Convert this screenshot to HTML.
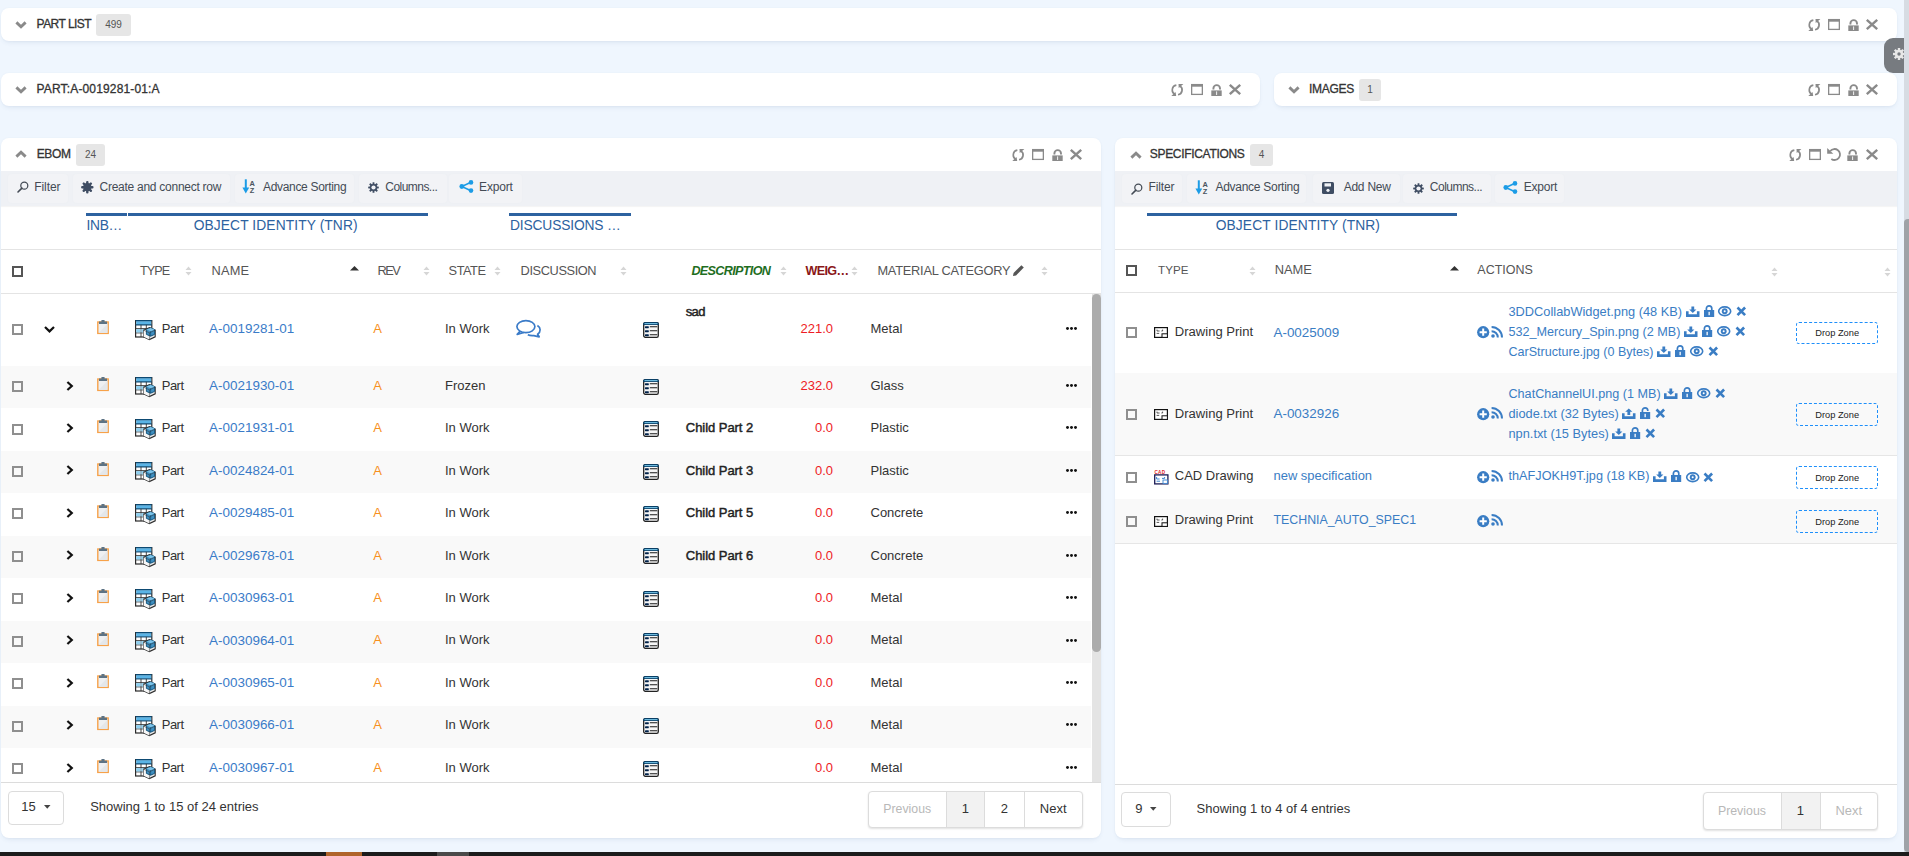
<!DOCTYPE html><html><head><meta charset="utf-8"><style>
html,body{margin:0;padding:0;}
body{width:1909px;height:856px;overflow:hidden;position:relative;background:#eff6fe;font-family:"Liberation Sans", sans-serif;}
.t{position:absolute;white-space:nowrap;}
.panel{position:absolute;background:#fff;border-radius:8px;box-shadow:0 3px 5px -2px rgba(60,90,140,0.13),0 0 2px rgba(60,90,140,0.05);}
.badge{position:absolute;background:#e6e6e6;border-radius:3px;text-align:center;font-size:10px;color:#555;}
svg{overflow:visible;}
</style></head><body>
<div class="panel" style="left:1px;top:8px;width:1896px;height:33px"></div>
<svg style="position:absolute;left:15px;top:21px" width="12" height="8" viewBox="0 0 12 8"><path d="M1.4 1.4 L6 5.7 L10.6 1.4" fill="none" stroke="#8a8a8a" stroke-width="2.9"/></svg>
<div class="t" style="left:36.6px;top:17.00px;font-size:12px;line-height:15px;color:#333;font-weight:normal;font-style:normal;-webkit-text-stroke:0.3px #333;letter-spacing:-0.544px;">PART LIST</div>
<div class="badge" style="left:96px;top:14px;width:35px;height:22px;line-height:22px">499</div>
<svg style="position:absolute;left:1808.1999999999998px;top:18.9px" width="13" height="12.5" viewBox="0 0 13 12.5"><path d="M5.35 1.07 A4.9 4.9 0 0 0 4.13 10.34" fill="none" stroke="#8a8a8a" stroke-width="1.7"/><path d="M7.05 10.73 A4.9 4.9 0 0 0 8.65 1.66" fill="none" stroke="#8a8a8a" stroke-width="1.7"/><path d="M0.33 11.9 L5.2 11.9 L4.5 8.1Z" fill="#8a8a8a"/><path d="M7.5 0 L12.4 0 L7.7 4.1Z" fill="#8a8a8a"/></svg>
<svg style="position:absolute;left:1828px;top:18.9px" width="12" height="11" viewBox="0 0 12 11"><rect x="0.65" y="0.6" width="10.7" height="9.8" fill="none" stroke="#8a8a8a" stroke-width="1.3"/><rect x="0" y="0" width="12" height="2.7" fill="#8a8a8a"/></svg>
<svg style="position:absolute;left:1847.6px;top:18.9px" width="11" height="12" viewBox="0 0 11 12"><path d="M2.4 5.6 V4.4 A3.3 3.3 0 0 1 9 4.4 V5.6" fill="none" stroke="#8a8a8a" stroke-width="1.9"/><rect x="0.3" y="6.4" width="10.4" height="5.6" fill="#8a8a8a"/><rect x="5.2" y="7.4" width="0.9" height="3.6" fill="#fff"/></svg>
<svg style="position:absolute;left:1866px;top:18.9px" width="12" height="11" viewBox="0 0 12 11"><path d="M0.8 0.8 L11.2 10.2 M11.2 0.8 L0.8 10.2" stroke="#8a8a8a" stroke-width="2.4"/></svg>
<div class="panel" style="left:1px;top:73px;width:1259px;height:33px"></div>
<svg style="position:absolute;left:15px;top:86px" width="12" height="8" viewBox="0 0 12 8"><path d="M1.4 1.4 L6 5.7 L10.6 1.4" fill="none" stroke="#8a8a8a" stroke-width="2.9"/></svg>
<div class="t" style="left:36.6px;top:82.00px;font-size:12px;line-height:15px;color:#333;font-weight:normal;font-style:normal;-webkit-text-stroke:0.3px #333;letter-spacing:0.150px;">PART:A-0019281-01:A</div>
<svg style="position:absolute;left:1171.1999999999998px;top:83.9px" width="13" height="12.5" viewBox="0 0 13 12.5"><path d="M5.35 1.07 A4.9 4.9 0 0 0 4.13 10.34" fill="none" stroke="#8a8a8a" stroke-width="1.7"/><path d="M7.05 10.73 A4.9 4.9 0 0 0 8.65 1.66" fill="none" stroke="#8a8a8a" stroke-width="1.7"/><path d="M0.33 11.9 L5.2 11.9 L4.5 8.1Z" fill="#8a8a8a"/><path d="M7.5 0 L12.4 0 L7.7 4.1Z" fill="#8a8a8a"/></svg>
<svg style="position:absolute;left:1191px;top:83.9px" width="12" height="11" viewBox="0 0 12 11"><rect x="0.65" y="0.6" width="10.7" height="9.8" fill="none" stroke="#8a8a8a" stroke-width="1.3"/><rect x="0" y="0" width="12" height="2.7" fill="#8a8a8a"/></svg>
<svg style="position:absolute;left:1210.6px;top:83.9px" width="11" height="12" viewBox="0 0 11 12"><path d="M2.4 5.6 V4.4 A3.3 3.3 0 0 1 9 4.4 V5.6" fill="none" stroke="#8a8a8a" stroke-width="1.9"/><rect x="0.3" y="6.4" width="10.4" height="5.6" fill="#8a8a8a"/><rect x="5.2" y="7.4" width="0.9" height="3.6" fill="#fff"/></svg>
<svg style="position:absolute;left:1229px;top:83.9px" width="12" height="11" viewBox="0 0 12 11"><path d="M0.8 0.8 L11.2 10.2 M11.2 0.8 L0.8 10.2" stroke="#8a8a8a" stroke-width="2.4"/></svg>
<div class="panel" style="left:1274px;top:73px;width:623px;height:33px"></div>
<svg style="position:absolute;left:1288px;top:86px" width="12" height="8" viewBox="0 0 12 8"><path d="M1.4 1.4 L6 5.7 L10.6 1.4" fill="none" stroke="#8a8a8a" stroke-width="2.9"/></svg>
<div class="t" style="left:1309px;top:82.00px;font-size:12px;line-height:15px;color:#333;font-weight:normal;font-style:normal;-webkit-text-stroke:0.3px #333;letter-spacing:-0.295px;">IMAGES</div>
<div class="badge" style="left:1359px;top:79px;width:22px;height:22px;line-height:22px">1</div>
<svg style="position:absolute;left:1808.1999999999998px;top:83.9px" width="13" height="12.5" viewBox="0 0 13 12.5"><path d="M5.35 1.07 A4.9 4.9 0 0 0 4.13 10.34" fill="none" stroke="#8a8a8a" stroke-width="1.7"/><path d="M7.05 10.73 A4.9 4.9 0 0 0 8.65 1.66" fill="none" stroke="#8a8a8a" stroke-width="1.7"/><path d="M0.33 11.9 L5.2 11.9 L4.5 8.1Z" fill="#8a8a8a"/><path d="M7.5 0 L12.4 0 L7.7 4.1Z" fill="#8a8a8a"/></svg>
<svg style="position:absolute;left:1828px;top:83.9px" width="12" height="11" viewBox="0 0 12 11"><rect x="0.65" y="0.6" width="10.7" height="9.8" fill="none" stroke="#8a8a8a" stroke-width="1.3"/><rect x="0" y="0" width="12" height="2.7" fill="#8a8a8a"/></svg>
<svg style="position:absolute;left:1847.6px;top:83.9px" width="11" height="12" viewBox="0 0 11 12"><path d="M2.4 5.6 V4.4 A3.3 3.3 0 0 1 9 4.4 V5.6" fill="none" stroke="#8a8a8a" stroke-width="1.9"/><rect x="0.3" y="6.4" width="10.4" height="5.6" fill="#8a8a8a"/><rect x="5.2" y="7.4" width="0.9" height="3.6" fill="#fff"/></svg>
<svg style="position:absolute;left:1866px;top:83.9px" width="12" height="11" viewBox="0 0 12 11"><path d="M0.8 0.8 L11.2 10.2 M11.2 0.8 L0.8 10.2" stroke="#8a8a8a" stroke-width="2.4"/></svg>
<div style="position:absolute;left:1884px;top:38px;width:22px;height:34.6px;background:#777b80;border-radius:9px 0 0 9px;"></div>
<svg style="position:absolute;left:1893px;top:48px" width="12" height="12" viewBox="0 0 12 12"><g fill="#e8e8e8"><circle cx="6" cy="6" r="4.2"/><rect x="4.8" y="0" width="2.4" height="12"/><rect x="0" y="4.8" width="12" height="2.4"/><rect x="4.8" y="0" width="2.4" height="12" transform="rotate(45 6 6)"/><rect x="4.8" y="0" width="2.4" height="12" transform="rotate(-45 6 6)"/></g><circle cx="6" cy="6" r="1.7" fill="#777b80"/></svg>
<div style="position:absolute;left:1904px;top:0px;width:5px;height:856px;background:#d7dce3;"></div>
<div style="position:absolute;left:1904px;top:219px;width:5px;height:633px;background:#9fa3a8;border-radius:4px 0 0 4px;"></div>
<div style="position:absolute;left:0px;top:852px;width:1909px;height:4px;background:#1c1c1c;"></div>
<div style="position:absolute;left:326px;top:852px;width:36px;height:4px;background:#b0642a;"></div>
<div style="position:absolute;left:437px;top:852px;width:32px;height:4px;background:#4a4a4a;"></div>
<div class="panel" style="left:1px;top:138px;width:1100px;height:700px"></div>
<svg style="position:absolute;left:15px;top:150px" width="12" height="8" viewBox="0 0 12 8"><path d="M1.4 6.6 L6 2.3 L10.6 6.6" fill="none" stroke="#8a8a8a" stroke-width="2.9"/></svg>
<div class="t" style="left:36.7px;top:147.00px;font-size:12px;line-height:15px;color:#333;font-weight:normal;font-style:normal;-webkit-text-stroke:0.3px #333;letter-spacing:-0.346px;">EBOM</div>
<div class="badge" style="left:76px;top:144px;width:29px;height:22px;line-height:22px">24</div>
<svg style="position:absolute;left:1012.2px;top:149.4px" width="13" height="12.5" viewBox="0 0 13 12.5"><path d="M5.35 1.07 A4.9 4.9 0 0 0 4.13 10.34" fill="none" stroke="#8a8a8a" stroke-width="1.7"/><path d="M7.05 10.73 A4.9 4.9 0 0 0 8.65 1.66" fill="none" stroke="#8a8a8a" stroke-width="1.7"/><path d="M0.33 11.9 L5.2 11.9 L4.5 8.1Z" fill="#8a8a8a"/><path d="M7.5 0 L12.4 0 L7.7 4.1Z" fill="#8a8a8a"/></svg>
<svg style="position:absolute;left:1032px;top:149.4px" width="12" height="11" viewBox="0 0 12 11"><rect x="0.65" y="0.6" width="10.7" height="9.8" fill="none" stroke="#8a8a8a" stroke-width="1.3"/><rect x="0" y="0" width="12" height="2.7" fill="#8a8a8a"/></svg>
<svg style="position:absolute;left:1051.6px;top:149.4px" width="11" height="12" viewBox="0 0 11 12"><path d="M2.4 5.6 V4.4 A3.3 3.3 0 0 1 9 4.4 V5.6" fill="none" stroke="#8a8a8a" stroke-width="1.9"/><rect x="0.3" y="6.4" width="10.4" height="5.6" fill="#8a8a8a"/><rect x="5.2" y="7.4" width="0.9" height="3.6" fill="#fff"/></svg>
<svg style="position:absolute;left:1070px;top:149.4px" width="12" height="11" viewBox="0 0 12 11"><path d="M0.8 0.8 L11.2 10.2 M11.2 0.8 L0.8 10.2" stroke="#8a8a8a" stroke-width="2.4"/></svg>
<div style="position:absolute;left:1px;top:171px;width:1100px;height:35px;background:#eff1f5;box-shadow:0 1px 1px rgba(0,0,0,0.04);"></div>
<div style="position:absolute;left:8px;top:174px;width:60px;height:29px;background:#f2f3f6;border-radius:4px;box-shadow:0 0 0 1px #eef0f4;"></div>
<div style="position:absolute;left:73px;top:174px;width:157px;height:29px;background:#f2f3f6;border-radius:4px;box-shadow:0 0 0 1px #eef0f4;"></div>
<div style="position:absolute;left:235px;top:174px;width:119px;height:29px;background:#f2f3f6;border-radius:4px;box-shadow:0 0 0 1px #eef0f4;"></div>
<div style="position:absolute;left:359px;top:174px;width:88px;height:29px;background:#f2f3f6;border-radius:4px;box-shadow:0 0 0 1px #eef0f4;"></div>
<div style="position:absolute;left:449px;top:174px;width:73px;height:29px;background:#f2f3f6;border-radius:4px;box-shadow:0 0 0 1px #eef0f4;"></div>
<svg style="position:absolute;left:16.5px;top:181px" width="12" height="12" viewBox="0 0 12 12"><circle cx="7.3" cy="4.7" r="3.5" fill="none" stroke="#444b55" stroke-width="1.25"/><path d="M4.9 7.1 L1 11" stroke="#444b55" stroke-width="1.6" stroke-linecap="round"/></svg>
<div class="t" style="left:34.2px;top:180.00px;font-size:12px;line-height:15px;color:#444b55;font-weight:normal;font-style:normal;letter-spacing:-0.053px;">Filter</div>
<svg style="position:absolute;left:81px;top:181px" width="12.6" height="12.4" viewBox="0 0 12.6 12.4"><rect x="5.1" y="0" width="2.4" height="12.4" rx="1" fill="#3f4d63" transform="rotate(0 6.3 6.2)"/><rect x="5.1" y="0" width="2.4" height="12.4" rx="1" fill="#3f4d63" transform="rotate(45 6.3 6.2)"/><rect x="5.1" y="0" width="2.4" height="12.4" rx="1" fill="#3f4d63" transform="rotate(90 6.3 6.2)"/><rect x="5.1" y="0" width="2.4" height="12.4" rx="1" fill="#3f4d63" transform="rotate(135 6.3 6.2)"/><circle cx="6.3" cy="6.2" r="4.1" fill="#3f4d63"/></svg>
<div class="t" style="left:99.5px;top:180.00px;font-size:12px;line-height:15px;color:#444b55;font-weight:normal;font-style:normal;letter-spacing:-0.262px;">Create and connect row</div>
<svg style="position:absolute;left:242px;top:178.5px" width="14" height="15" viewBox="0 0 14 15"><path d="M3.8 0.3 V10" stroke="#1c9ce6" stroke-width="2"/><path d="M0.4 8.4 L7.2 8.4 L3.8 14.4Z" fill="#1c9ce6"/><text x="7.6" y="6.6" font-size="7.4" font-family="Liberation Sans" font-weight="bold" fill="#4a5560">A</text><text x="7.8" y="14" font-size="7.4" font-family="Liberation Sans" font-weight="bold" fill="#4a5560">Z</text></svg>
<div class="t" style="left:263px;top:180.00px;font-size:12px;line-height:15px;color:#444b55;font-weight:normal;font-style:normal;letter-spacing:-0.318px;">Advance Sorting</div>
<svg style="position:absolute;left:368px;top:182px" width="11" height="11" viewBox="0 0 11 11"><rect x="4.55" y="0.2" width="1.9" height="10.6" rx="0.4" fill="#3f4d63" transform="rotate(0 5.5 5.5)"/><rect x="4.55" y="0.2" width="1.9" height="10.6" rx="0.4" fill="#3f4d63" transform="rotate(45 5.5 5.5)"/><rect x="4.55" y="0.2" width="1.9" height="10.6" rx="0.4" fill="#3f4d63" transform="rotate(90 5.5 5.5)"/><rect x="4.55" y="0.2" width="1.9" height="10.6" rx="0.4" fill="#3f4d63" transform="rotate(135 5.5 5.5)"/><circle cx="5.5" cy="5.5" r="3.6" fill="#3f4d63"/><circle cx="5.5" cy="5.5" r="2.1" fill="#f1f2f6"/></svg>
<div class="t" style="left:385.3px;top:180.00px;font-size:12px;line-height:15px;color:#444b55;font-weight:normal;font-style:normal;letter-spacing:-0.539px;">Columns...</div>
<svg style="position:absolute;left:459px;top:180px" width="15" height="13" viewBox="0 0 15 13"><path d="M2.8 6.5 L12 2.2 M2.8 6.5 L12 10.8" stroke="#1c9ce6" stroke-width="1.5"/><circle cx="2.8" cy="6.5" r="2.4" fill="#1c9ce6"/><circle cx="12" cy="2.4" r="2.3" fill="#1c9ce6"/><circle cx="12" cy="10.6" r="2.3" fill="#1c9ce6"/></svg>
<div class="t" style="left:479.1px;top:180.00px;font-size:12px;line-height:15px;color:#444b55;font-weight:normal;font-style:normal;letter-spacing:-0.176px;">Export</div>
<div style="position:absolute;left:86px;top:213px;width:40.8px;height:3px;background:#2d62a0;"></div>
<div style="position:absolute;left:128px;top:213px;width:300px;height:3px;background:#2d62a0;"></div>
<div style="position:absolute;left:509px;top:213px;width:122px;height:3px;background:#2d62a0;"></div>
<div class="t" style="left:86.6px;top:217.00px;font-size:13.8px;line-height:17px;color:#2d62a0;font-weight:normal;font-style:normal;letter-spacing:-0.335px;">INB…</div>
<div class="t" style="left:193.7px;top:217.00px;font-size:13.8px;line-height:17px;color:#2d62a0;font-weight:normal;font-style:normal;letter-spacing:0.094px;">OBJECT IDENTITY (TNR)</div>
<div class="t" style="left:510px;top:217.00px;font-size:13.8px;line-height:17px;color:#2d62a0;font-weight:normal;font-style:normal;letter-spacing:-0.160px;">DISCUSSIONS …</div>
<div style="position:absolute;left:1px;top:249px;width:1100px;height:1px;background:#e4e4e4;"></div>
<div style="position:absolute;left:11.5px;top:265.5px;width:11px;height:11px;border:2px solid #555;box-sizing:border-box;"></div>
<div class="t" style="left:140px;top:263.00px;font-size:12.6px;line-height:16px;color:#555;font-weight:normal;font-style:normal;letter-spacing:-0.903px;">TYPE</div>
<svg style="position:absolute;left:185px;top:266px" width="7" height="10" viewBox="0 0 7 10"><path d="M0.5 4 L3.5 0.5 L6.5 4Z M0.5 6 L3.5 9.5 L6.5 6Z" fill="#d6d6d6"/></svg>
<div class="t" style="left:211.6px;top:263.00px;font-size:12.8px;line-height:16px;color:#555;font-weight:normal;font-style:normal;letter-spacing:0.139px;">NAME</div>
<svg style="position:absolute;left:349.5px;top:265.5px" width="9" height="5" viewBox="0 0 9 5"><path d="M0 4.5 L4.5 0 L9 4.5Z" fill="#333"/></svg>
<div class="t" style="left:377.6px;top:263.00px;font-size:12.8px;line-height:16px;color:#555;font-weight:normal;font-style:normal;letter-spacing:-1.610px;">REV</div>
<svg style="position:absolute;left:422.5px;top:266px" width="7" height="10" viewBox="0 0 7 10"><path d="M0.5 4 L3.5 0.5 L6.5 4Z M0.5 6 L3.5 9.5 L6.5 6Z" fill="#d6d6d6"/></svg>
<div class="t" style="left:448.6px;top:263.00px;font-size:12.8px;line-height:16px;color:#555;font-weight:normal;font-style:normal;letter-spacing:-0.488px;">STATE</div>
<svg style="position:absolute;left:494px;top:266px" width="7" height="10" viewBox="0 0 7 10"><path d="M0.5 4 L3.5 0.5 L6.5 4Z M0.5 6 L3.5 9.5 L6.5 6Z" fill="#d6d6d6"/></svg>
<div class="t" style="left:520.6px;top:263.00px;font-size:12.8px;line-height:16px;color:#555;font-weight:normal;font-style:normal;letter-spacing:-0.406px;">DISCUSSION</div>
<svg style="position:absolute;left:620px;top:266px" width="7" height="10" viewBox="0 0 7 10"><path d="M0.5 4 L3.5 0.5 L6.5 4Z M0.5 6 L3.5 9.5 L6.5 6Z" fill="#d6d6d6"/></svg>
<div class="t" style="left:691.4px;top:263.00px;font-size:12.6px;line-height:16px;color:#1f6e1f;font-weight:bold;font-style:italic;letter-spacing:-0.651px;">DESCRIPTION</div>
<svg style="position:absolute;left:780px;top:266px" width="7" height="10" viewBox="0 0 7 10"><path d="M0.5 4 L3.5 0.5 L6.5 4Z M0.5 6 L3.5 9.5 L6.5 6Z" fill="#d6d6d6"/></svg>
<div class="t" style="left:805.5px;top:263.00px;font-size:12.6px;line-height:16px;color:#8a1717;font-weight:bold;font-style:normal;letter-spacing:-0.675px;">WEIG…</div>
<svg style="position:absolute;left:851px;top:266px" width="7" height="10" viewBox="0 0 7 10"><path d="M0.5 4 L3.5 0.5 L6.5 4Z M0.5 6 L3.5 9.5 L6.5 6Z" fill="#d6d6d6"/></svg>
<div class="t" style="left:877.4px;top:263.00px;font-size:12.8px;line-height:16px;color:#555;font-weight:normal;font-style:normal;letter-spacing:-0.231px;">MATERIAL CATEGORY</div>
<svg style="position:absolute;left:1012px;top:264px" width="13" height="13" viewBox="0 0 13 13"><path d="M1 12 L1.6 9 L9.4 1.2 L11.8 3.6 L4 11.4Z" fill="#555"/></svg>
<svg style="position:absolute;left:1041px;top:266px" width="7" height="10" viewBox="0 0 7 10"><path d="M0.5 4 L3.5 0.5 L6.5 4Z M0.5 6 L3.5 9.5 L6.5 6Z" fill="#d6d6d6"/></svg>
<div style="position:absolute;left:1px;top:293px;width:1100px;height:1px;background:#e4e4e4;"></div>
<div style="position:absolute;left:0;top:0;width:1909px;height:856px;clip-path:inset(294px 818px 73.5px 1px)">
<div style="position:absolute;left:12px;top:324.2px;width:11px;height:11px;border:2px solid #8f8f8f;box-sizing:border-box;"></div>
<svg style="position:absolute;left:44px;top:325.7px" width="11" height="7" viewBox="0 0 11 7"><path d="M1 1 L5.5 5.4 L10 1" fill="none" stroke="#111" stroke-width="2.2"/></svg>
<svg style="position:absolute;left:97px;top:320.0px" width="12" height="14" viewBox="0 0 12 14"><rect x="0.8" y="2" width="10.4" height="11.4" fill="#eef0f2" stroke="#f7a24a" stroke-width="1.4"/><path d="M1.5 13 L10.5 4 V13Z" fill="#e4e7ea"/><path d="M2 1.6 H10 V4 H2Z" fill="#5d7384"/><rect x="4.2" y="0" width="3.6" height="2" rx="1" fill="#5d7384"/></svg>
<svg style="position:absolute;left:135px;top:320.0px" width="21" height="20" viewBox="0 0 21 20"><rect x="0.6" y="0.6" width="16.2" height="16.4" fill="#fff" stroke="#2a2a2a" stroke-width="1.2"/><rect x="1.2" y="1.2" width="15" height="3.6" fill="#5ab4e6"/><path d="M0.6 4.9 H16.8" stroke="#0d4a73" stroke-width="1.1"/><path d="M0.6 0.6 H16.8" stroke="#0d4a73" stroke-width="1.2"/><path d="M0.6 8.6 H16.8 M0.6 12.9 H16.8 M6 4.9 V17 M11.3 4.9 V17" stroke="#333" stroke-width="0.9"/><rect x="1.2" y="9.1" width="4.4" height="3.4" fill="#8fd0f0"/><rect x="6.4" y="9.1" width="4.5" height="3.4" fill="#8fd0f0"/><path d="M8.6 10.2 L14.4 7.6 L20.2 10.2 V16.8 L14.4 19.6 L8.6 16.8Z" fill="#e9e9e9" stroke="#2f2f2f" stroke-width="1.1"/><path d="M8.6 10.2 L14.4 12.8 L14.4 19.6 L8.6 16.8Z" fill="#f7f7f7"/><path d="M11.4 9.6 L15.6 7.9 L19.6 9.6 V14.4 L15.6 16.2 L11.4 14.4Z" fill="#3f8fc0" stroke="#0f4f77" stroke-width="0.9"/><path d="M11.4 9.6 L15.6 11.3 L19.6 9.6 L15.6 7.9Z" fill="#7cc4ea"/><path d="M15.6 11.3 V16.2" stroke="#0f4f77" stroke-width="0.7"/><path d="M8.6 10.2 L14.4 12.8 L20.2 10.2 M14.4 12.8 V19.6" fill="none" stroke="#2f2f2f" stroke-width="0.8" opacity="0.6"/></svg>
<div class="t" style="left:161.8px;top:321.00px;font-size:13px;line-height:16px;color:#333;font-weight:normal;font-style:normal;letter-spacing:-0.547px;">Part</div>
<div class="t" style="left:209.1px;top:320.00px;font-size:13.45px;line-height:17px;color:#3a7bc8;font-weight:normal;font-style:normal;">A-0019281-01</div>
<div class="t" style="left:373.2px;top:321.00px;font-size:13px;line-height:16px;color:#f7901e;font-weight:normal;font-style:normal;">A</div>
<div class="t" style="left:445px;top:321.00px;font-size:13px;line-height:16px;color:#333;font-weight:normal;font-style:normal;">In Work</div>
<svg style="position:absolute;left:516px;top:319.7px" width="24" height="18" viewBox="0 0 24 18"><ellipse cx="9.9" cy="6.6" rx="9" ry="6" fill="none" stroke="#3a7bc8" stroke-width="1.7"/><path d="M4.2 11.2 L1.2 14.4 L7.8 12.5" fill="none" stroke="#3a7bc8" stroke-width="1.7" stroke-linejoin="round"/><path d="M21.4 5.4 A6.2 5.4 0 0 1 21.6 14.2 L23.2 16.8 L17.8 15.6 Q14.2 15.9 11.8 14.8" fill="none" stroke="#3a7bc8" stroke-width="1.7" stroke-linejoin="round"/></svg>
<svg style="position:absolute;left:643px;top:321.8px" width="16" height="16" viewBox="0 0 16 16"><rect x="0.7" y="0.7" width="14.6" height="14.6" rx="1.6" fill="#f6f6f6" stroke="#222" stroke-width="1.3"/><path d="M0.05 3.0 V2.3 A2.25 2.25 0 0 1 2.3 0.05 H13.7 A2.25 2.25 0 0 1 15.95 2.3 V3.0 Z" fill="#0a3f66"/><rect x="1.5" y="1.15" width="13" height="1.0" fill="#7fcff3"/><rect x="2" y="4.3" width="3.8" height="1.9" rx="0.4" fill="#00224a"/><rect x="2" y="8.3" width="3.8" height="1.9" rx="0.4" fill="#00224a"/><rect x="2" y="12.3" width="3.8" height="1.9" rx="0.4" fill="#00224a"/><path d="M7.2 4.75 H13.9 M7.2 8.75 H13.9 M7.2 12.75 H13.9" stroke="#1a1a1a" stroke-width="1.05" stroke-linecap="round"/></svg>
<div class="t" style="left:685.8px;top:304.00px;font-size:13px;line-height:16px;color:#222;font-weight:normal;font-style:normal;-webkit-text-stroke:0.45px #222;letter-spacing:-0.679px;">sad</div>
<div class="t" style="right:1076px;top:321.00px;font-size:13px;line-height:16px;color:#ee1c25;font-weight:normal;font-style:normal;">221.0</div>
<div class="t" style="left:870.5px;top:321.00px;font-size:13px;line-height:16px;color:#333;font-weight:normal;font-style:normal;">Metal</div>
<svg style="position:absolute;left:1066.4px;top:327.0px" width="11" height="3" viewBox="0 0 11 3"><circle cx="1.5" cy="1.5" r="1.45" fill="#111"/><circle cx="5.5" cy="1.5" r="1.45" fill="#111"/><circle cx="9.5" cy="1.5" r="1.45" fill="#111"/></svg>
<div style="position:absolute;left:1px;top:366.0px;width:1090px;height:42.44px;background:#f9f9f9;"></div>
<div style="position:absolute;left:12px;top:381.1px;width:11px;height:11px;border:2px solid #8f8f8f;box-sizing:border-box;"></div>
<svg style="position:absolute;left:65.5px;top:380.6px" width="8" height="10" viewBox="0 0 8 10"><path d="M1.4 1 L5.8 5 L1.4 9" fill="none" stroke="#111" stroke-width="2.2"/></svg>
<svg style="position:absolute;left:97px;top:376.90000000000003px" width="12" height="14" viewBox="0 0 12 14"><rect x="0.8" y="2" width="10.4" height="11.4" fill="#eef0f2" stroke="#f7a24a" stroke-width="1.4"/><path d="M1.5 13 L10.5 4 V13Z" fill="#e4e7ea"/><path d="M2 1.6 H10 V4 H2Z" fill="#5d7384"/><rect x="4.2" y="0" width="3.6" height="2" rx="1" fill="#5d7384"/></svg>
<svg style="position:absolute;left:135px;top:376.90000000000003px" width="21" height="20" viewBox="0 0 21 20"><rect x="0.6" y="0.6" width="16.2" height="16.4" fill="#fff" stroke="#2a2a2a" stroke-width="1.2"/><rect x="1.2" y="1.2" width="15" height="3.6" fill="#5ab4e6"/><path d="M0.6 4.9 H16.8" stroke="#0d4a73" stroke-width="1.1"/><path d="M0.6 0.6 H16.8" stroke="#0d4a73" stroke-width="1.2"/><path d="M0.6 8.6 H16.8 M0.6 12.9 H16.8 M6 4.9 V17 M11.3 4.9 V17" stroke="#333" stroke-width="0.9"/><rect x="1.2" y="9.1" width="4.4" height="3.4" fill="#8fd0f0"/><rect x="6.4" y="9.1" width="4.5" height="3.4" fill="#8fd0f0"/><path d="M8.6 10.2 L14.4 7.6 L20.2 10.2 V16.8 L14.4 19.6 L8.6 16.8Z" fill="#e9e9e9" stroke="#2f2f2f" stroke-width="1.1"/><path d="M8.6 10.2 L14.4 12.8 L14.4 19.6 L8.6 16.8Z" fill="#f7f7f7"/><path d="M11.4 9.6 L15.6 7.9 L19.6 9.6 V14.4 L15.6 16.2 L11.4 14.4Z" fill="#3f8fc0" stroke="#0f4f77" stroke-width="0.9"/><path d="M11.4 9.6 L15.6 11.3 L19.6 9.6 L15.6 7.9Z" fill="#7cc4ea"/><path d="M15.6 11.3 V16.2" stroke="#0f4f77" stroke-width="0.7"/><path d="M8.6 10.2 L14.4 12.8 L20.2 10.2 M14.4 12.8 V19.6" fill="none" stroke="#2f2f2f" stroke-width="0.8" opacity="0.6"/></svg>
<div class="t" style="left:161.8px;top:378.00px;font-size:13px;line-height:16px;color:#333;font-weight:normal;font-style:normal;letter-spacing:-0.547px;">Part</div>
<div class="t" style="left:209.1px;top:377.00px;font-size:13.45px;line-height:17px;color:#3a7bc8;font-weight:normal;font-style:normal;">A-0021930-01</div>
<div class="t" style="left:373.2px;top:378.00px;font-size:13px;line-height:16px;color:#f7901e;font-weight:normal;font-style:normal;">A</div>
<div class="t" style="left:445px;top:378.00px;font-size:13px;line-height:16px;color:#333;font-weight:normal;font-style:normal;">Frozen</div>
<svg style="position:absolute;left:643px;top:378.70000000000005px" width="16" height="16" viewBox="0 0 16 16"><rect x="0.7" y="0.7" width="14.6" height="14.6" rx="1.6" fill="#f6f6f6" stroke="#222" stroke-width="1.3"/><path d="M0.05 3.0 V2.3 A2.25 2.25 0 0 1 2.3 0.05 H13.7 A2.25 2.25 0 0 1 15.95 2.3 V3.0 Z" fill="#0a3f66"/><rect x="1.5" y="1.15" width="13" height="1.0" fill="#7fcff3"/><rect x="2" y="4.3" width="3.8" height="1.9" rx="0.4" fill="#00224a"/><rect x="2" y="8.3" width="3.8" height="1.9" rx="0.4" fill="#00224a"/><rect x="2" y="12.3" width="3.8" height="1.9" rx="0.4" fill="#00224a"/><path d="M7.2 4.75 H13.9 M7.2 8.75 H13.9 M7.2 12.75 H13.9" stroke="#1a1a1a" stroke-width="1.05" stroke-linecap="round"/></svg>
<div class="t" style="right:1076px;top:378.00px;font-size:13px;line-height:16px;color:#ee1c25;font-weight:normal;font-style:normal;">232.0</div>
<div class="t" style="left:870.5px;top:378.00px;font-size:13px;line-height:16px;color:#333;font-weight:normal;font-style:normal;">Glass</div>
<svg style="position:absolute;left:1066.4px;top:383.90000000000003px" width="11" height="3" viewBox="0 0 11 3"><circle cx="1.5" cy="1.5" r="1.45" fill="#111"/><circle cx="5.5" cy="1.5" r="1.45" fill="#111"/><circle cx="9.5" cy="1.5" r="1.45" fill="#111"/></svg>
<div style="position:absolute;left:12px;top:423.54px;width:11px;height:11px;border:2px solid #8f8f8f;box-sizing:border-box;"></div>
<svg style="position:absolute;left:65.5px;top:423.04px" width="8" height="10" viewBox="0 0 8 10"><path d="M1.4 1 L5.8 5 L1.4 9" fill="none" stroke="#111" stroke-width="2.2"/></svg>
<svg style="position:absolute;left:97px;top:419.34000000000003px" width="12" height="14" viewBox="0 0 12 14"><rect x="0.8" y="2" width="10.4" height="11.4" fill="#eef0f2" stroke="#f7a24a" stroke-width="1.4"/><path d="M1.5 13 L10.5 4 V13Z" fill="#e4e7ea"/><path d="M2 1.6 H10 V4 H2Z" fill="#5d7384"/><rect x="4.2" y="0" width="3.6" height="2" rx="1" fill="#5d7384"/></svg>
<svg style="position:absolute;left:135px;top:419.34000000000003px" width="21" height="20" viewBox="0 0 21 20"><rect x="0.6" y="0.6" width="16.2" height="16.4" fill="#fff" stroke="#2a2a2a" stroke-width="1.2"/><rect x="1.2" y="1.2" width="15" height="3.6" fill="#5ab4e6"/><path d="M0.6 4.9 H16.8" stroke="#0d4a73" stroke-width="1.1"/><path d="M0.6 0.6 H16.8" stroke="#0d4a73" stroke-width="1.2"/><path d="M0.6 8.6 H16.8 M0.6 12.9 H16.8 M6 4.9 V17 M11.3 4.9 V17" stroke="#333" stroke-width="0.9"/><rect x="1.2" y="9.1" width="4.4" height="3.4" fill="#8fd0f0"/><rect x="6.4" y="9.1" width="4.5" height="3.4" fill="#8fd0f0"/><path d="M8.6 10.2 L14.4 7.6 L20.2 10.2 V16.8 L14.4 19.6 L8.6 16.8Z" fill="#e9e9e9" stroke="#2f2f2f" stroke-width="1.1"/><path d="M8.6 10.2 L14.4 12.8 L14.4 19.6 L8.6 16.8Z" fill="#f7f7f7"/><path d="M11.4 9.6 L15.6 7.9 L19.6 9.6 V14.4 L15.6 16.2 L11.4 14.4Z" fill="#3f8fc0" stroke="#0f4f77" stroke-width="0.9"/><path d="M11.4 9.6 L15.6 11.3 L19.6 9.6 L15.6 7.9Z" fill="#7cc4ea"/><path d="M15.6 11.3 V16.2" stroke="#0f4f77" stroke-width="0.7"/><path d="M8.6 10.2 L14.4 12.8 L20.2 10.2 M14.4 12.8 V19.6" fill="none" stroke="#2f2f2f" stroke-width="0.8" opacity="0.6"/></svg>
<div class="t" style="left:161.8px;top:420.00px;font-size:13px;line-height:16px;color:#333;font-weight:normal;font-style:normal;letter-spacing:-0.547px;">Part</div>
<div class="t" style="left:209.1px;top:419.00px;font-size:13.45px;line-height:17px;color:#3a7bc8;font-weight:normal;font-style:normal;">A-0021931-01</div>
<div class="t" style="left:373.2px;top:420.00px;font-size:13px;line-height:16px;color:#f7901e;font-weight:normal;font-style:normal;">A</div>
<div class="t" style="left:445px;top:420.00px;font-size:13px;line-height:16px;color:#333;font-weight:normal;font-style:normal;">In Work</div>
<svg style="position:absolute;left:643px;top:421.14000000000004px" width="16" height="16" viewBox="0 0 16 16"><rect x="0.7" y="0.7" width="14.6" height="14.6" rx="1.6" fill="#f6f6f6" stroke="#222" stroke-width="1.3"/><path d="M0.05 3.0 V2.3 A2.25 2.25 0 0 1 2.3 0.05 H13.7 A2.25 2.25 0 0 1 15.95 2.3 V3.0 Z" fill="#0a3f66"/><rect x="1.5" y="1.15" width="13" height="1.0" fill="#7fcff3"/><rect x="2" y="4.3" width="3.8" height="1.9" rx="0.4" fill="#00224a"/><rect x="2" y="8.3" width="3.8" height="1.9" rx="0.4" fill="#00224a"/><rect x="2" y="12.3" width="3.8" height="1.9" rx="0.4" fill="#00224a"/><path d="M7.2 4.75 H13.9 M7.2 8.75 H13.9 M7.2 12.75 H13.9" stroke="#1a1a1a" stroke-width="1.05" stroke-linecap="round"/></svg>
<div class="t" style="left:685.8px;top:420.00px;font-size:13px;line-height:16px;color:#222;font-weight:normal;font-style:normal;-webkit-text-stroke:0.45px #222;letter-spacing:-0.047px;">Child Part 2</div>
<div class="t" style="right:1076px;top:420.00px;font-size:13px;line-height:16px;color:#ee1c25;font-weight:normal;font-style:normal;">0.0</div>
<div class="t" style="left:870.5px;top:420.00px;font-size:13px;line-height:16px;color:#333;font-weight:normal;font-style:normal;">Plastic</div>
<svg style="position:absolute;left:1066.4px;top:426.34000000000003px" width="11" height="3" viewBox="0 0 11 3"><circle cx="1.5" cy="1.5" r="1.45" fill="#111"/><circle cx="5.5" cy="1.5" r="1.45" fill="#111"/><circle cx="9.5" cy="1.5" r="1.45" fill="#111"/></svg>
<div style="position:absolute;left:1px;top:450.88px;width:1090px;height:42.44px;background:#f9f9f9;"></div>
<div style="position:absolute;left:12px;top:465.98px;width:11px;height:11px;border:2px solid #8f8f8f;box-sizing:border-box;"></div>
<svg style="position:absolute;left:65.5px;top:465.48px" width="8" height="10" viewBox="0 0 8 10"><path d="M1.4 1 L5.8 5 L1.4 9" fill="none" stroke="#111" stroke-width="2.2"/></svg>
<svg style="position:absolute;left:97px;top:461.78000000000003px" width="12" height="14" viewBox="0 0 12 14"><rect x="0.8" y="2" width="10.4" height="11.4" fill="#eef0f2" stroke="#f7a24a" stroke-width="1.4"/><path d="M1.5 13 L10.5 4 V13Z" fill="#e4e7ea"/><path d="M2 1.6 H10 V4 H2Z" fill="#5d7384"/><rect x="4.2" y="0" width="3.6" height="2" rx="1" fill="#5d7384"/></svg>
<svg style="position:absolute;left:135px;top:461.78000000000003px" width="21" height="20" viewBox="0 0 21 20"><rect x="0.6" y="0.6" width="16.2" height="16.4" fill="#fff" stroke="#2a2a2a" stroke-width="1.2"/><rect x="1.2" y="1.2" width="15" height="3.6" fill="#5ab4e6"/><path d="M0.6 4.9 H16.8" stroke="#0d4a73" stroke-width="1.1"/><path d="M0.6 0.6 H16.8" stroke="#0d4a73" stroke-width="1.2"/><path d="M0.6 8.6 H16.8 M0.6 12.9 H16.8 M6 4.9 V17 M11.3 4.9 V17" stroke="#333" stroke-width="0.9"/><rect x="1.2" y="9.1" width="4.4" height="3.4" fill="#8fd0f0"/><rect x="6.4" y="9.1" width="4.5" height="3.4" fill="#8fd0f0"/><path d="M8.6 10.2 L14.4 7.6 L20.2 10.2 V16.8 L14.4 19.6 L8.6 16.8Z" fill="#e9e9e9" stroke="#2f2f2f" stroke-width="1.1"/><path d="M8.6 10.2 L14.4 12.8 L14.4 19.6 L8.6 16.8Z" fill="#f7f7f7"/><path d="M11.4 9.6 L15.6 7.9 L19.6 9.6 V14.4 L15.6 16.2 L11.4 14.4Z" fill="#3f8fc0" stroke="#0f4f77" stroke-width="0.9"/><path d="M11.4 9.6 L15.6 11.3 L19.6 9.6 L15.6 7.9Z" fill="#7cc4ea"/><path d="M15.6 11.3 V16.2" stroke="#0f4f77" stroke-width="0.7"/><path d="M8.6 10.2 L14.4 12.8 L20.2 10.2 M14.4 12.8 V19.6" fill="none" stroke="#2f2f2f" stroke-width="0.8" opacity="0.6"/></svg>
<div class="t" style="left:161.8px;top:463.00px;font-size:13px;line-height:16px;color:#333;font-weight:normal;font-style:normal;letter-spacing:-0.547px;">Part</div>
<div class="t" style="left:209.1px;top:462.00px;font-size:13.45px;line-height:17px;color:#3a7bc8;font-weight:normal;font-style:normal;">A-0024824-01</div>
<div class="t" style="left:373.2px;top:463.00px;font-size:13px;line-height:16px;color:#f7901e;font-weight:normal;font-style:normal;">A</div>
<div class="t" style="left:445px;top:463.00px;font-size:13px;line-height:16px;color:#333;font-weight:normal;font-style:normal;">In Work</div>
<svg style="position:absolute;left:643px;top:463.58000000000004px" width="16" height="16" viewBox="0 0 16 16"><rect x="0.7" y="0.7" width="14.6" height="14.6" rx="1.6" fill="#f6f6f6" stroke="#222" stroke-width="1.3"/><path d="M0.05 3.0 V2.3 A2.25 2.25 0 0 1 2.3 0.05 H13.7 A2.25 2.25 0 0 1 15.95 2.3 V3.0 Z" fill="#0a3f66"/><rect x="1.5" y="1.15" width="13" height="1.0" fill="#7fcff3"/><rect x="2" y="4.3" width="3.8" height="1.9" rx="0.4" fill="#00224a"/><rect x="2" y="8.3" width="3.8" height="1.9" rx="0.4" fill="#00224a"/><rect x="2" y="12.3" width="3.8" height="1.9" rx="0.4" fill="#00224a"/><path d="M7.2 4.75 H13.9 M7.2 8.75 H13.9 M7.2 12.75 H13.9" stroke="#1a1a1a" stroke-width="1.05" stroke-linecap="round"/></svg>
<div class="t" style="left:685.8px;top:463.00px;font-size:13px;line-height:16px;color:#222;font-weight:normal;font-style:normal;-webkit-text-stroke:0.45px #222;letter-spacing:-0.047px;">Child Part 3</div>
<div class="t" style="right:1076px;top:463.00px;font-size:13px;line-height:16px;color:#ee1c25;font-weight:normal;font-style:normal;">0.0</div>
<div class="t" style="left:870.5px;top:463.00px;font-size:13px;line-height:16px;color:#333;font-weight:normal;font-style:normal;">Plastic</div>
<svg style="position:absolute;left:1066.4px;top:468.78000000000003px" width="11" height="3" viewBox="0 0 11 3"><circle cx="1.5" cy="1.5" r="1.45" fill="#111"/><circle cx="5.5" cy="1.5" r="1.45" fill="#111"/><circle cx="9.5" cy="1.5" r="1.45" fill="#111"/></svg>
<div style="position:absolute;left:12px;top:508.41999999999996px;width:11px;height:11px;border:2px solid #8f8f8f;box-sizing:border-box;"></div>
<svg style="position:absolute;left:65.5px;top:507.91999999999996px" width="8" height="10" viewBox="0 0 8 10"><path d="M1.4 1 L5.8 5 L1.4 9" fill="none" stroke="#111" stroke-width="2.2"/></svg>
<svg style="position:absolute;left:97px;top:504.21999999999997px" width="12" height="14" viewBox="0 0 12 14"><rect x="0.8" y="2" width="10.4" height="11.4" fill="#eef0f2" stroke="#f7a24a" stroke-width="1.4"/><path d="M1.5 13 L10.5 4 V13Z" fill="#e4e7ea"/><path d="M2 1.6 H10 V4 H2Z" fill="#5d7384"/><rect x="4.2" y="0" width="3.6" height="2" rx="1" fill="#5d7384"/></svg>
<svg style="position:absolute;left:135px;top:504.21999999999997px" width="21" height="20" viewBox="0 0 21 20"><rect x="0.6" y="0.6" width="16.2" height="16.4" fill="#fff" stroke="#2a2a2a" stroke-width="1.2"/><rect x="1.2" y="1.2" width="15" height="3.6" fill="#5ab4e6"/><path d="M0.6 4.9 H16.8" stroke="#0d4a73" stroke-width="1.1"/><path d="M0.6 0.6 H16.8" stroke="#0d4a73" stroke-width="1.2"/><path d="M0.6 8.6 H16.8 M0.6 12.9 H16.8 M6 4.9 V17 M11.3 4.9 V17" stroke="#333" stroke-width="0.9"/><rect x="1.2" y="9.1" width="4.4" height="3.4" fill="#8fd0f0"/><rect x="6.4" y="9.1" width="4.5" height="3.4" fill="#8fd0f0"/><path d="M8.6 10.2 L14.4 7.6 L20.2 10.2 V16.8 L14.4 19.6 L8.6 16.8Z" fill="#e9e9e9" stroke="#2f2f2f" stroke-width="1.1"/><path d="M8.6 10.2 L14.4 12.8 L14.4 19.6 L8.6 16.8Z" fill="#f7f7f7"/><path d="M11.4 9.6 L15.6 7.9 L19.6 9.6 V14.4 L15.6 16.2 L11.4 14.4Z" fill="#3f8fc0" stroke="#0f4f77" stroke-width="0.9"/><path d="M11.4 9.6 L15.6 11.3 L19.6 9.6 L15.6 7.9Z" fill="#7cc4ea"/><path d="M15.6 11.3 V16.2" stroke="#0f4f77" stroke-width="0.7"/><path d="M8.6 10.2 L14.4 12.8 L20.2 10.2 M14.4 12.8 V19.6" fill="none" stroke="#2f2f2f" stroke-width="0.8" opacity="0.6"/></svg>
<div class="t" style="left:161.8px;top:505.00px;font-size:13px;line-height:16px;color:#333;font-weight:normal;font-style:normal;letter-spacing:-0.547px;">Part</div>
<div class="t" style="left:209.1px;top:504.00px;font-size:13.45px;line-height:17px;color:#3a7bc8;font-weight:normal;font-style:normal;">A-0029485-01</div>
<div class="t" style="left:373.2px;top:505.00px;font-size:13px;line-height:16px;color:#f7901e;font-weight:normal;font-style:normal;">A</div>
<div class="t" style="left:445px;top:505.00px;font-size:13px;line-height:16px;color:#333;font-weight:normal;font-style:normal;">In Work</div>
<svg style="position:absolute;left:643px;top:506.02px" width="16" height="16" viewBox="0 0 16 16"><rect x="0.7" y="0.7" width="14.6" height="14.6" rx="1.6" fill="#f6f6f6" stroke="#222" stroke-width="1.3"/><path d="M0.05 3.0 V2.3 A2.25 2.25 0 0 1 2.3 0.05 H13.7 A2.25 2.25 0 0 1 15.95 2.3 V3.0 Z" fill="#0a3f66"/><rect x="1.5" y="1.15" width="13" height="1.0" fill="#7fcff3"/><rect x="2" y="4.3" width="3.8" height="1.9" rx="0.4" fill="#00224a"/><rect x="2" y="8.3" width="3.8" height="1.9" rx="0.4" fill="#00224a"/><rect x="2" y="12.3" width="3.8" height="1.9" rx="0.4" fill="#00224a"/><path d="M7.2 4.75 H13.9 M7.2 8.75 H13.9 M7.2 12.75 H13.9" stroke="#1a1a1a" stroke-width="1.05" stroke-linecap="round"/></svg>
<div class="t" style="left:685.8px;top:505.00px;font-size:13px;line-height:16px;color:#222;font-weight:normal;font-style:normal;-webkit-text-stroke:0.45px #222;letter-spacing:-0.047px;">Child Part 5</div>
<div class="t" style="right:1076px;top:505.00px;font-size:13px;line-height:16px;color:#ee1c25;font-weight:normal;font-style:normal;">0.0</div>
<div class="t" style="left:870.5px;top:505.00px;font-size:13px;line-height:16px;color:#333;font-weight:normal;font-style:normal;">Concrete</div>
<svg style="position:absolute;left:1066.4px;top:511.21999999999997px" width="11" height="3" viewBox="0 0 11 3"><circle cx="1.5" cy="1.5" r="1.45" fill="#111"/><circle cx="5.5" cy="1.5" r="1.45" fill="#111"/><circle cx="9.5" cy="1.5" r="1.45" fill="#111"/></svg>
<div style="position:absolute;left:1px;top:535.76px;width:1090px;height:42.44px;background:#f9f9f9;"></div>
<div style="position:absolute;left:12px;top:550.86px;width:11px;height:11px;border:2px solid #8f8f8f;box-sizing:border-box;"></div>
<svg style="position:absolute;left:65.5px;top:550.36px" width="8" height="10" viewBox="0 0 8 10"><path d="M1.4 1 L5.8 5 L1.4 9" fill="none" stroke="#111" stroke-width="2.2"/></svg>
<svg style="position:absolute;left:97px;top:546.66px" width="12" height="14" viewBox="0 0 12 14"><rect x="0.8" y="2" width="10.4" height="11.4" fill="#eef0f2" stroke="#f7a24a" stroke-width="1.4"/><path d="M1.5 13 L10.5 4 V13Z" fill="#e4e7ea"/><path d="M2 1.6 H10 V4 H2Z" fill="#5d7384"/><rect x="4.2" y="0" width="3.6" height="2" rx="1" fill="#5d7384"/></svg>
<svg style="position:absolute;left:135px;top:546.66px" width="21" height="20" viewBox="0 0 21 20"><rect x="0.6" y="0.6" width="16.2" height="16.4" fill="#fff" stroke="#2a2a2a" stroke-width="1.2"/><rect x="1.2" y="1.2" width="15" height="3.6" fill="#5ab4e6"/><path d="M0.6 4.9 H16.8" stroke="#0d4a73" stroke-width="1.1"/><path d="M0.6 0.6 H16.8" stroke="#0d4a73" stroke-width="1.2"/><path d="M0.6 8.6 H16.8 M0.6 12.9 H16.8 M6 4.9 V17 M11.3 4.9 V17" stroke="#333" stroke-width="0.9"/><rect x="1.2" y="9.1" width="4.4" height="3.4" fill="#8fd0f0"/><rect x="6.4" y="9.1" width="4.5" height="3.4" fill="#8fd0f0"/><path d="M8.6 10.2 L14.4 7.6 L20.2 10.2 V16.8 L14.4 19.6 L8.6 16.8Z" fill="#e9e9e9" stroke="#2f2f2f" stroke-width="1.1"/><path d="M8.6 10.2 L14.4 12.8 L14.4 19.6 L8.6 16.8Z" fill="#f7f7f7"/><path d="M11.4 9.6 L15.6 7.9 L19.6 9.6 V14.4 L15.6 16.2 L11.4 14.4Z" fill="#3f8fc0" stroke="#0f4f77" stroke-width="0.9"/><path d="M11.4 9.6 L15.6 11.3 L19.6 9.6 L15.6 7.9Z" fill="#7cc4ea"/><path d="M15.6 11.3 V16.2" stroke="#0f4f77" stroke-width="0.7"/><path d="M8.6 10.2 L14.4 12.8 L20.2 10.2 M14.4 12.8 V19.6" fill="none" stroke="#2f2f2f" stroke-width="0.8" opacity="0.6"/></svg>
<div class="t" style="left:161.8px;top:548.00px;font-size:13px;line-height:16px;color:#333;font-weight:normal;font-style:normal;letter-spacing:-0.547px;">Part</div>
<div class="t" style="left:209.1px;top:547.00px;font-size:13.45px;line-height:17px;color:#3a7bc8;font-weight:normal;font-style:normal;">A-0029678-01</div>
<div class="t" style="left:373.2px;top:548.00px;font-size:13px;line-height:16px;color:#f7901e;font-weight:normal;font-style:normal;">A</div>
<div class="t" style="left:445px;top:548.00px;font-size:13px;line-height:16px;color:#333;font-weight:normal;font-style:normal;">In Work</div>
<svg style="position:absolute;left:643px;top:548.46px" width="16" height="16" viewBox="0 0 16 16"><rect x="0.7" y="0.7" width="14.6" height="14.6" rx="1.6" fill="#f6f6f6" stroke="#222" stroke-width="1.3"/><path d="M0.05 3.0 V2.3 A2.25 2.25 0 0 1 2.3 0.05 H13.7 A2.25 2.25 0 0 1 15.95 2.3 V3.0 Z" fill="#0a3f66"/><rect x="1.5" y="1.15" width="13" height="1.0" fill="#7fcff3"/><rect x="2" y="4.3" width="3.8" height="1.9" rx="0.4" fill="#00224a"/><rect x="2" y="8.3" width="3.8" height="1.9" rx="0.4" fill="#00224a"/><rect x="2" y="12.3" width="3.8" height="1.9" rx="0.4" fill="#00224a"/><path d="M7.2 4.75 H13.9 M7.2 8.75 H13.9 M7.2 12.75 H13.9" stroke="#1a1a1a" stroke-width="1.05" stroke-linecap="round"/></svg>
<div class="t" style="left:685.8px;top:548.00px;font-size:13px;line-height:16px;color:#222;font-weight:normal;font-style:normal;-webkit-text-stroke:0.45px #222;letter-spacing:-0.047px;">Child Part 6</div>
<div class="t" style="right:1076px;top:548.00px;font-size:13px;line-height:16px;color:#ee1c25;font-weight:normal;font-style:normal;">0.0</div>
<div class="t" style="left:870.5px;top:548.00px;font-size:13px;line-height:16px;color:#333;font-weight:normal;font-style:normal;">Concrete</div>
<svg style="position:absolute;left:1066.4px;top:553.66px" width="11" height="3" viewBox="0 0 11 3"><circle cx="1.5" cy="1.5" r="1.45" fill="#111"/><circle cx="5.5" cy="1.5" r="1.45" fill="#111"/><circle cx="9.5" cy="1.5" r="1.45" fill="#111"/></svg>
<div style="position:absolute;left:12px;top:593.3000000000001px;width:11px;height:11px;border:2px solid #8f8f8f;box-sizing:border-box;"></div>
<svg style="position:absolute;left:65.5px;top:592.8000000000001px" width="8" height="10" viewBox="0 0 8 10"><path d="M1.4 1 L5.8 5 L1.4 9" fill="none" stroke="#111" stroke-width="2.2"/></svg>
<svg style="position:absolute;left:97px;top:589.1px" width="12" height="14" viewBox="0 0 12 14"><rect x="0.8" y="2" width="10.4" height="11.4" fill="#eef0f2" stroke="#f7a24a" stroke-width="1.4"/><path d="M1.5 13 L10.5 4 V13Z" fill="#e4e7ea"/><path d="M2 1.6 H10 V4 H2Z" fill="#5d7384"/><rect x="4.2" y="0" width="3.6" height="2" rx="1" fill="#5d7384"/></svg>
<svg style="position:absolute;left:135px;top:589.1px" width="21" height="20" viewBox="0 0 21 20"><rect x="0.6" y="0.6" width="16.2" height="16.4" fill="#fff" stroke="#2a2a2a" stroke-width="1.2"/><rect x="1.2" y="1.2" width="15" height="3.6" fill="#5ab4e6"/><path d="M0.6 4.9 H16.8" stroke="#0d4a73" stroke-width="1.1"/><path d="M0.6 0.6 H16.8" stroke="#0d4a73" stroke-width="1.2"/><path d="M0.6 8.6 H16.8 M0.6 12.9 H16.8 M6 4.9 V17 M11.3 4.9 V17" stroke="#333" stroke-width="0.9"/><rect x="1.2" y="9.1" width="4.4" height="3.4" fill="#8fd0f0"/><rect x="6.4" y="9.1" width="4.5" height="3.4" fill="#8fd0f0"/><path d="M8.6 10.2 L14.4 7.6 L20.2 10.2 V16.8 L14.4 19.6 L8.6 16.8Z" fill="#e9e9e9" stroke="#2f2f2f" stroke-width="1.1"/><path d="M8.6 10.2 L14.4 12.8 L14.4 19.6 L8.6 16.8Z" fill="#f7f7f7"/><path d="M11.4 9.6 L15.6 7.9 L19.6 9.6 V14.4 L15.6 16.2 L11.4 14.4Z" fill="#3f8fc0" stroke="#0f4f77" stroke-width="0.9"/><path d="M11.4 9.6 L15.6 11.3 L19.6 9.6 L15.6 7.9Z" fill="#7cc4ea"/><path d="M15.6 11.3 V16.2" stroke="#0f4f77" stroke-width="0.7"/><path d="M8.6 10.2 L14.4 12.8 L20.2 10.2 M14.4 12.8 V19.6" fill="none" stroke="#2f2f2f" stroke-width="0.8" opacity="0.6"/></svg>
<div class="t" style="left:161.8px;top:590.00px;font-size:13px;line-height:16px;color:#333;font-weight:normal;font-style:normal;letter-spacing:-0.547px;">Part</div>
<div class="t" style="left:209.1px;top:589.00px;font-size:13.45px;line-height:17px;color:#3a7bc8;font-weight:normal;font-style:normal;">A-0030963-01</div>
<div class="t" style="left:373.2px;top:590.00px;font-size:13px;line-height:16px;color:#f7901e;font-weight:normal;font-style:normal;">A</div>
<div class="t" style="left:445px;top:590.00px;font-size:13px;line-height:16px;color:#333;font-weight:normal;font-style:normal;">In Work</div>
<svg style="position:absolute;left:643px;top:590.9000000000001px" width="16" height="16" viewBox="0 0 16 16"><rect x="0.7" y="0.7" width="14.6" height="14.6" rx="1.6" fill="#f6f6f6" stroke="#222" stroke-width="1.3"/><path d="M0.05 3.0 V2.3 A2.25 2.25 0 0 1 2.3 0.05 H13.7 A2.25 2.25 0 0 1 15.95 2.3 V3.0 Z" fill="#0a3f66"/><rect x="1.5" y="1.15" width="13" height="1.0" fill="#7fcff3"/><rect x="2" y="4.3" width="3.8" height="1.9" rx="0.4" fill="#00224a"/><rect x="2" y="8.3" width="3.8" height="1.9" rx="0.4" fill="#00224a"/><rect x="2" y="12.3" width="3.8" height="1.9" rx="0.4" fill="#00224a"/><path d="M7.2 4.75 H13.9 M7.2 8.75 H13.9 M7.2 12.75 H13.9" stroke="#1a1a1a" stroke-width="1.05" stroke-linecap="round"/></svg>
<div class="t" style="right:1076px;top:590.00px;font-size:13px;line-height:16px;color:#ee1c25;font-weight:normal;font-style:normal;">0.0</div>
<div class="t" style="left:870.5px;top:590.00px;font-size:13px;line-height:16px;color:#333;font-weight:normal;font-style:normal;">Metal</div>
<svg style="position:absolute;left:1066.4px;top:596.1px" width="11" height="3" viewBox="0 0 11 3"><circle cx="1.5" cy="1.5" r="1.45" fill="#111"/><circle cx="5.5" cy="1.5" r="1.45" fill="#111"/><circle cx="9.5" cy="1.5" r="1.45" fill="#111"/></svg>
<div style="position:absolute;left:1px;top:620.64px;width:1090px;height:42.44px;background:#f9f9f9;"></div>
<div style="position:absolute;left:12px;top:635.74px;width:11px;height:11px;border:2px solid #8f8f8f;box-sizing:border-box;"></div>
<svg style="position:absolute;left:65.5px;top:635.24px" width="8" height="10" viewBox="0 0 8 10"><path d="M1.4 1 L5.8 5 L1.4 9" fill="none" stroke="#111" stroke-width="2.2"/></svg>
<svg style="position:absolute;left:97px;top:631.54px" width="12" height="14" viewBox="0 0 12 14"><rect x="0.8" y="2" width="10.4" height="11.4" fill="#eef0f2" stroke="#f7a24a" stroke-width="1.4"/><path d="M1.5 13 L10.5 4 V13Z" fill="#e4e7ea"/><path d="M2 1.6 H10 V4 H2Z" fill="#5d7384"/><rect x="4.2" y="0" width="3.6" height="2" rx="1" fill="#5d7384"/></svg>
<svg style="position:absolute;left:135px;top:631.54px" width="21" height="20" viewBox="0 0 21 20"><rect x="0.6" y="0.6" width="16.2" height="16.4" fill="#fff" stroke="#2a2a2a" stroke-width="1.2"/><rect x="1.2" y="1.2" width="15" height="3.6" fill="#5ab4e6"/><path d="M0.6 4.9 H16.8" stroke="#0d4a73" stroke-width="1.1"/><path d="M0.6 0.6 H16.8" stroke="#0d4a73" stroke-width="1.2"/><path d="M0.6 8.6 H16.8 M0.6 12.9 H16.8 M6 4.9 V17 M11.3 4.9 V17" stroke="#333" stroke-width="0.9"/><rect x="1.2" y="9.1" width="4.4" height="3.4" fill="#8fd0f0"/><rect x="6.4" y="9.1" width="4.5" height="3.4" fill="#8fd0f0"/><path d="M8.6 10.2 L14.4 7.6 L20.2 10.2 V16.8 L14.4 19.6 L8.6 16.8Z" fill="#e9e9e9" stroke="#2f2f2f" stroke-width="1.1"/><path d="M8.6 10.2 L14.4 12.8 L14.4 19.6 L8.6 16.8Z" fill="#f7f7f7"/><path d="M11.4 9.6 L15.6 7.9 L19.6 9.6 V14.4 L15.6 16.2 L11.4 14.4Z" fill="#3f8fc0" stroke="#0f4f77" stroke-width="0.9"/><path d="M11.4 9.6 L15.6 11.3 L19.6 9.6 L15.6 7.9Z" fill="#7cc4ea"/><path d="M15.6 11.3 V16.2" stroke="#0f4f77" stroke-width="0.7"/><path d="M8.6 10.2 L14.4 12.8 L20.2 10.2 M14.4 12.8 V19.6" fill="none" stroke="#2f2f2f" stroke-width="0.8" opacity="0.6"/></svg>
<div class="t" style="left:161.8px;top:632.00px;font-size:13px;line-height:16px;color:#333;font-weight:normal;font-style:normal;letter-spacing:-0.547px;">Part</div>
<div class="t" style="left:209.1px;top:632.00px;font-size:13.45px;line-height:17px;color:#3a7bc8;font-weight:normal;font-style:normal;">A-0030964-01</div>
<div class="t" style="left:373.2px;top:632.00px;font-size:13px;line-height:16px;color:#f7901e;font-weight:normal;font-style:normal;">A</div>
<div class="t" style="left:445px;top:632.00px;font-size:13px;line-height:16px;color:#333;font-weight:normal;font-style:normal;">In Work</div>
<svg style="position:absolute;left:643px;top:633.34px" width="16" height="16" viewBox="0 0 16 16"><rect x="0.7" y="0.7" width="14.6" height="14.6" rx="1.6" fill="#f6f6f6" stroke="#222" stroke-width="1.3"/><path d="M0.05 3.0 V2.3 A2.25 2.25 0 0 1 2.3 0.05 H13.7 A2.25 2.25 0 0 1 15.95 2.3 V3.0 Z" fill="#0a3f66"/><rect x="1.5" y="1.15" width="13" height="1.0" fill="#7fcff3"/><rect x="2" y="4.3" width="3.8" height="1.9" rx="0.4" fill="#00224a"/><rect x="2" y="8.3" width="3.8" height="1.9" rx="0.4" fill="#00224a"/><rect x="2" y="12.3" width="3.8" height="1.9" rx="0.4" fill="#00224a"/><path d="M7.2 4.75 H13.9 M7.2 8.75 H13.9 M7.2 12.75 H13.9" stroke="#1a1a1a" stroke-width="1.05" stroke-linecap="round"/></svg>
<div class="t" style="right:1076px;top:632.00px;font-size:13px;line-height:16px;color:#ee1c25;font-weight:normal;font-style:normal;">0.0</div>
<div class="t" style="left:870.5px;top:632.00px;font-size:13px;line-height:16px;color:#333;font-weight:normal;font-style:normal;">Metal</div>
<svg style="position:absolute;left:1066.4px;top:638.54px" width="11" height="3" viewBox="0 0 11 3"><circle cx="1.5" cy="1.5" r="1.45" fill="#111"/><circle cx="5.5" cy="1.5" r="1.45" fill="#111"/><circle cx="9.5" cy="1.5" r="1.45" fill="#111"/></svg>
<div style="position:absolute;left:12px;top:678.18px;width:11px;height:11px;border:2px solid #8f8f8f;box-sizing:border-box;"></div>
<svg style="position:absolute;left:65.5px;top:677.68px" width="8" height="10" viewBox="0 0 8 10"><path d="M1.4 1 L5.8 5 L1.4 9" fill="none" stroke="#111" stroke-width="2.2"/></svg>
<svg style="position:absolute;left:97px;top:673.9799999999999px" width="12" height="14" viewBox="0 0 12 14"><rect x="0.8" y="2" width="10.4" height="11.4" fill="#eef0f2" stroke="#f7a24a" stroke-width="1.4"/><path d="M1.5 13 L10.5 4 V13Z" fill="#e4e7ea"/><path d="M2 1.6 H10 V4 H2Z" fill="#5d7384"/><rect x="4.2" y="0" width="3.6" height="2" rx="1" fill="#5d7384"/></svg>
<svg style="position:absolute;left:135px;top:673.9799999999999px" width="21" height="20" viewBox="0 0 21 20"><rect x="0.6" y="0.6" width="16.2" height="16.4" fill="#fff" stroke="#2a2a2a" stroke-width="1.2"/><rect x="1.2" y="1.2" width="15" height="3.6" fill="#5ab4e6"/><path d="M0.6 4.9 H16.8" stroke="#0d4a73" stroke-width="1.1"/><path d="M0.6 0.6 H16.8" stroke="#0d4a73" stroke-width="1.2"/><path d="M0.6 8.6 H16.8 M0.6 12.9 H16.8 M6 4.9 V17 M11.3 4.9 V17" stroke="#333" stroke-width="0.9"/><rect x="1.2" y="9.1" width="4.4" height="3.4" fill="#8fd0f0"/><rect x="6.4" y="9.1" width="4.5" height="3.4" fill="#8fd0f0"/><path d="M8.6 10.2 L14.4 7.6 L20.2 10.2 V16.8 L14.4 19.6 L8.6 16.8Z" fill="#e9e9e9" stroke="#2f2f2f" stroke-width="1.1"/><path d="M8.6 10.2 L14.4 12.8 L14.4 19.6 L8.6 16.8Z" fill="#f7f7f7"/><path d="M11.4 9.6 L15.6 7.9 L19.6 9.6 V14.4 L15.6 16.2 L11.4 14.4Z" fill="#3f8fc0" stroke="#0f4f77" stroke-width="0.9"/><path d="M11.4 9.6 L15.6 11.3 L19.6 9.6 L15.6 7.9Z" fill="#7cc4ea"/><path d="M15.6 11.3 V16.2" stroke="#0f4f77" stroke-width="0.7"/><path d="M8.6 10.2 L14.4 12.8 L20.2 10.2 M14.4 12.8 V19.6" fill="none" stroke="#2f2f2f" stroke-width="0.8" opacity="0.6"/></svg>
<div class="t" style="left:161.8px;top:675.00px;font-size:13px;line-height:16px;color:#333;font-weight:normal;font-style:normal;letter-spacing:-0.547px;">Part</div>
<div class="t" style="left:209.1px;top:674.00px;font-size:13.45px;line-height:17px;color:#3a7bc8;font-weight:normal;font-style:normal;">A-0030965-01</div>
<div class="t" style="left:373.2px;top:675.00px;font-size:13px;line-height:16px;color:#f7901e;font-weight:normal;font-style:normal;">A</div>
<div class="t" style="left:445px;top:675.00px;font-size:13px;line-height:16px;color:#333;font-weight:normal;font-style:normal;">In Work</div>
<svg style="position:absolute;left:643px;top:675.78px" width="16" height="16" viewBox="0 0 16 16"><rect x="0.7" y="0.7" width="14.6" height="14.6" rx="1.6" fill="#f6f6f6" stroke="#222" stroke-width="1.3"/><path d="M0.05 3.0 V2.3 A2.25 2.25 0 0 1 2.3 0.05 H13.7 A2.25 2.25 0 0 1 15.95 2.3 V3.0 Z" fill="#0a3f66"/><rect x="1.5" y="1.15" width="13" height="1.0" fill="#7fcff3"/><rect x="2" y="4.3" width="3.8" height="1.9" rx="0.4" fill="#00224a"/><rect x="2" y="8.3" width="3.8" height="1.9" rx="0.4" fill="#00224a"/><rect x="2" y="12.3" width="3.8" height="1.9" rx="0.4" fill="#00224a"/><path d="M7.2 4.75 H13.9 M7.2 8.75 H13.9 M7.2 12.75 H13.9" stroke="#1a1a1a" stroke-width="1.05" stroke-linecap="round"/></svg>
<div class="t" style="right:1076px;top:675.00px;font-size:13px;line-height:16px;color:#ee1c25;font-weight:normal;font-style:normal;">0.0</div>
<div class="t" style="left:870.5px;top:675.00px;font-size:13px;line-height:16px;color:#333;font-weight:normal;font-style:normal;">Metal</div>
<svg style="position:absolute;left:1066.4px;top:680.9799999999999px" width="11" height="3" viewBox="0 0 11 3"><circle cx="1.5" cy="1.5" r="1.45" fill="#111"/><circle cx="5.5" cy="1.5" r="1.45" fill="#111"/><circle cx="9.5" cy="1.5" r="1.45" fill="#111"/></svg>
<div style="position:absolute;left:1px;top:705.52px;width:1090px;height:42.44px;background:#f9f9f9;"></div>
<div style="position:absolute;left:12px;top:720.62px;width:11px;height:11px;border:2px solid #8f8f8f;box-sizing:border-box;"></div>
<svg style="position:absolute;left:65.5px;top:720.12px" width="8" height="10" viewBox="0 0 8 10"><path d="M1.4 1 L5.8 5 L1.4 9" fill="none" stroke="#111" stroke-width="2.2"/></svg>
<svg style="position:absolute;left:97px;top:716.42px" width="12" height="14" viewBox="0 0 12 14"><rect x="0.8" y="2" width="10.4" height="11.4" fill="#eef0f2" stroke="#f7a24a" stroke-width="1.4"/><path d="M1.5 13 L10.5 4 V13Z" fill="#e4e7ea"/><path d="M2 1.6 H10 V4 H2Z" fill="#5d7384"/><rect x="4.2" y="0" width="3.6" height="2" rx="1" fill="#5d7384"/></svg>
<svg style="position:absolute;left:135px;top:716.42px" width="21" height="20" viewBox="0 0 21 20"><rect x="0.6" y="0.6" width="16.2" height="16.4" fill="#fff" stroke="#2a2a2a" stroke-width="1.2"/><rect x="1.2" y="1.2" width="15" height="3.6" fill="#5ab4e6"/><path d="M0.6 4.9 H16.8" stroke="#0d4a73" stroke-width="1.1"/><path d="M0.6 0.6 H16.8" stroke="#0d4a73" stroke-width="1.2"/><path d="M0.6 8.6 H16.8 M0.6 12.9 H16.8 M6 4.9 V17 M11.3 4.9 V17" stroke="#333" stroke-width="0.9"/><rect x="1.2" y="9.1" width="4.4" height="3.4" fill="#8fd0f0"/><rect x="6.4" y="9.1" width="4.5" height="3.4" fill="#8fd0f0"/><path d="M8.6 10.2 L14.4 7.6 L20.2 10.2 V16.8 L14.4 19.6 L8.6 16.8Z" fill="#e9e9e9" stroke="#2f2f2f" stroke-width="1.1"/><path d="M8.6 10.2 L14.4 12.8 L14.4 19.6 L8.6 16.8Z" fill="#f7f7f7"/><path d="M11.4 9.6 L15.6 7.9 L19.6 9.6 V14.4 L15.6 16.2 L11.4 14.4Z" fill="#3f8fc0" stroke="#0f4f77" stroke-width="0.9"/><path d="M11.4 9.6 L15.6 11.3 L19.6 9.6 L15.6 7.9Z" fill="#7cc4ea"/><path d="M15.6 11.3 V16.2" stroke="#0f4f77" stroke-width="0.7"/><path d="M8.6 10.2 L14.4 12.8 L20.2 10.2 M14.4 12.8 V19.6" fill="none" stroke="#2f2f2f" stroke-width="0.8" opacity="0.6"/></svg>
<div class="t" style="left:161.8px;top:717.00px;font-size:13px;line-height:16px;color:#333;font-weight:normal;font-style:normal;letter-spacing:-0.547px;">Part</div>
<div class="t" style="left:209.1px;top:716.00px;font-size:13.45px;line-height:17px;color:#3a7bc8;font-weight:normal;font-style:normal;">A-0030966-01</div>
<div class="t" style="left:373.2px;top:717.00px;font-size:13px;line-height:16px;color:#f7901e;font-weight:normal;font-style:normal;">A</div>
<div class="t" style="left:445px;top:717.00px;font-size:13px;line-height:16px;color:#333;font-weight:normal;font-style:normal;">In Work</div>
<svg style="position:absolute;left:643px;top:718.22px" width="16" height="16" viewBox="0 0 16 16"><rect x="0.7" y="0.7" width="14.6" height="14.6" rx="1.6" fill="#f6f6f6" stroke="#222" stroke-width="1.3"/><path d="M0.05 3.0 V2.3 A2.25 2.25 0 0 1 2.3 0.05 H13.7 A2.25 2.25 0 0 1 15.95 2.3 V3.0 Z" fill="#0a3f66"/><rect x="1.5" y="1.15" width="13" height="1.0" fill="#7fcff3"/><rect x="2" y="4.3" width="3.8" height="1.9" rx="0.4" fill="#00224a"/><rect x="2" y="8.3" width="3.8" height="1.9" rx="0.4" fill="#00224a"/><rect x="2" y="12.3" width="3.8" height="1.9" rx="0.4" fill="#00224a"/><path d="M7.2 4.75 H13.9 M7.2 8.75 H13.9 M7.2 12.75 H13.9" stroke="#1a1a1a" stroke-width="1.05" stroke-linecap="round"/></svg>
<div class="t" style="right:1076px;top:717.00px;font-size:13px;line-height:16px;color:#ee1c25;font-weight:normal;font-style:normal;">0.0</div>
<div class="t" style="left:870.5px;top:717.00px;font-size:13px;line-height:16px;color:#333;font-weight:normal;font-style:normal;">Metal</div>
<svg style="position:absolute;left:1066.4px;top:723.42px" width="11" height="3" viewBox="0 0 11 3"><circle cx="1.5" cy="1.5" r="1.45" fill="#111"/><circle cx="5.5" cy="1.5" r="1.45" fill="#111"/><circle cx="9.5" cy="1.5" r="1.45" fill="#111"/></svg>
<div style="position:absolute;left:12px;top:763.0600000000001px;width:11px;height:11px;border:2px solid #8f8f8f;box-sizing:border-box;"></div>
<svg style="position:absolute;left:65.5px;top:762.5600000000001px" width="8" height="10" viewBox="0 0 8 10"><path d="M1.4 1 L5.8 5 L1.4 9" fill="none" stroke="#111" stroke-width="2.2"/></svg>
<svg style="position:absolute;left:97px;top:758.86px" width="12" height="14" viewBox="0 0 12 14"><rect x="0.8" y="2" width="10.4" height="11.4" fill="#eef0f2" stroke="#f7a24a" stroke-width="1.4"/><path d="M1.5 13 L10.5 4 V13Z" fill="#e4e7ea"/><path d="M2 1.6 H10 V4 H2Z" fill="#5d7384"/><rect x="4.2" y="0" width="3.6" height="2" rx="1" fill="#5d7384"/></svg>
<svg style="position:absolute;left:135px;top:758.86px" width="21" height="20" viewBox="0 0 21 20"><rect x="0.6" y="0.6" width="16.2" height="16.4" fill="#fff" stroke="#2a2a2a" stroke-width="1.2"/><rect x="1.2" y="1.2" width="15" height="3.6" fill="#5ab4e6"/><path d="M0.6 4.9 H16.8" stroke="#0d4a73" stroke-width="1.1"/><path d="M0.6 0.6 H16.8" stroke="#0d4a73" stroke-width="1.2"/><path d="M0.6 8.6 H16.8 M0.6 12.9 H16.8 M6 4.9 V17 M11.3 4.9 V17" stroke="#333" stroke-width="0.9"/><rect x="1.2" y="9.1" width="4.4" height="3.4" fill="#8fd0f0"/><rect x="6.4" y="9.1" width="4.5" height="3.4" fill="#8fd0f0"/><path d="M8.6 10.2 L14.4 7.6 L20.2 10.2 V16.8 L14.4 19.6 L8.6 16.8Z" fill="#e9e9e9" stroke="#2f2f2f" stroke-width="1.1"/><path d="M8.6 10.2 L14.4 12.8 L14.4 19.6 L8.6 16.8Z" fill="#f7f7f7"/><path d="M11.4 9.6 L15.6 7.9 L19.6 9.6 V14.4 L15.6 16.2 L11.4 14.4Z" fill="#3f8fc0" stroke="#0f4f77" stroke-width="0.9"/><path d="M11.4 9.6 L15.6 11.3 L19.6 9.6 L15.6 7.9Z" fill="#7cc4ea"/><path d="M15.6 11.3 V16.2" stroke="#0f4f77" stroke-width="0.7"/><path d="M8.6 10.2 L14.4 12.8 L20.2 10.2 M14.4 12.8 V19.6" fill="none" stroke="#2f2f2f" stroke-width="0.8" opacity="0.6"/></svg>
<div class="t" style="left:161.8px;top:760.00px;font-size:13px;line-height:16px;color:#333;font-weight:normal;font-style:normal;letter-spacing:-0.547px;">Part</div>
<div class="t" style="left:209.1px;top:759.00px;font-size:13.45px;line-height:17px;color:#3a7bc8;font-weight:normal;font-style:normal;">A-0030967-01</div>
<div class="t" style="left:373.2px;top:760.00px;font-size:13px;line-height:16px;color:#f7901e;font-weight:normal;font-style:normal;">A</div>
<div class="t" style="left:445px;top:760.00px;font-size:13px;line-height:16px;color:#333;font-weight:normal;font-style:normal;">In Work</div>
<svg style="position:absolute;left:643px;top:760.6600000000001px" width="16" height="16" viewBox="0 0 16 16"><rect x="0.7" y="0.7" width="14.6" height="14.6" rx="1.6" fill="#f6f6f6" stroke="#222" stroke-width="1.3"/><path d="M0.05 3.0 V2.3 A2.25 2.25 0 0 1 2.3 0.05 H13.7 A2.25 2.25 0 0 1 15.95 2.3 V3.0 Z" fill="#0a3f66"/><rect x="1.5" y="1.15" width="13" height="1.0" fill="#7fcff3"/><rect x="2" y="4.3" width="3.8" height="1.9" rx="0.4" fill="#00224a"/><rect x="2" y="8.3" width="3.8" height="1.9" rx="0.4" fill="#00224a"/><rect x="2" y="12.3" width="3.8" height="1.9" rx="0.4" fill="#00224a"/><path d="M7.2 4.75 H13.9 M7.2 8.75 H13.9 M7.2 12.75 H13.9" stroke="#1a1a1a" stroke-width="1.05" stroke-linecap="round"/></svg>
<div class="t" style="right:1076px;top:760.00px;font-size:13px;line-height:16px;color:#ee1c25;font-weight:normal;font-style:normal;">0.0</div>
<div class="t" style="left:870.5px;top:760.00px;font-size:13px;line-height:16px;color:#333;font-weight:normal;font-style:normal;">Metal</div>
<svg style="position:absolute;left:1066.4px;top:765.86px" width="11" height="3" viewBox="0 0 11 3"><circle cx="1.5" cy="1.5" r="1.45" fill="#111"/><circle cx="5.5" cy="1.5" r="1.45" fill="#111"/><circle cx="9.5" cy="1.5" r="1.45" fill="#111"/></svg>
</div>
<div style="position:absolute;left:1092px;top:294px;width:9px;height:488.5px;background:#e4e4e4;"></div>
<div style="position:absolute;left:1092px;top:294px;width:9px;height:357.6px;background:#acacac;border-radius:4.5px;"></div>
<div style="position:absolute;left:1px;top:782px;width:1100px;height:1px;background:#dcdcdc;"></div>
<div style="position:absolute;left:7.5px;top:790.5px;width:56px;height:34px;border:1px solid #dcdcdc;border-radius:4px;box-sizing:border-box;background:#fff;"></div>
<div class="t" style="left:21.3px;top:799.00px;font-size:13px;line-height:16px;color:#333;font-weight:normal;font-style:normal;">15</div>
<svg style="position:absolute;left:43.7px;top:805px" width="6.5" height="4" viewBox="0 0 6.5 4"><path d="M0 0 H6.5 L3.25 3.8Z" fill="#444"/></svg>
<div class="t" style="left:90.2px;top:799.00px;font-size:13px;line-height:16px;color:#333;font-weight:normal;font-style:normal;">Showing 1 to 15 of 24 entries</div>
<div style="position:absolute;left:867.5px;top:790.7px;width:215px;height:37.5px;border:1px solid #dcdcdc;border-radius:4px;box-sizing:border-box;box-shadow:0 1px 2px rgba(0,0,0,0.12);background:#fff;overflow:hidden"><div style="position:absolute;left:77.5px;top:0;width:39px;height:100%;background:#f2f2f2;border-left:1px solid #dcdcdc;border-right:1px solid #dcdcdc;box-sizing:border-box"></div><div style="position:absolute;left:155px;top:0;width:1px;height:100%;background:#dcdcdc"></div></div>
<div class="t" style="left:883.3px;top:802.00px;font-size:12.3px;line-height:15px;color:#b8b8b8;font-weight:normal;font-style:normal;">Previous</div>
<div class="t" style="left:961.8px;top:801.00px;font-size:13px;line-height:16px;color:#333;font-weight:normal;font-style:normal;">1</div>
<div class="t" style="left:1000.8px;top:801.00px;font-size:13px;line-height:16px;color:#333;font-weight:normal;font-style:normal;">2</div>
<div class="t" style="left:1039.8px;top:801.00px;font-size:13px;line-height:16px;color:#333;font-weight:normal;font-style:normal;">Next</div>
<div class="panel" style="left:1115px;top:138px;width:782px;height:700px"></div>
<svg style="position:absolute;left:1129.5px;top:150.5px" width="12" height="8" viewBox="0 0 12 8"><path d="M1.4 6.6 L6 2.3 L10.6 6.6" fill="none" stroke="#8a8a8a" stroke-width="2.9"/></svg>
<div class="t" style="left:1149.8px;top:147.00px;font-size:12px;line-height:15px;color:#333;font-weight:normal;font-style:normal;-webkit-text-stroke:0.3px #333;letter-spacing:-0.317px;">SPECIFICATIONS</div>
<div class="badge" style="left:1250px;top:144px;width:23px;height:22px;line-height:22px">4</div>
<svg style="position:absolute;left:1789.3999999999999px;top:149.4px" width="13" height="12.5" viewBox="0 0 13 12.5"><path d="M5.35 1.07 A4.9 4.9 0 0 0 4.13 10.34" fill="none" stroke="#8a8a8a" stroke-width="1.7"/><path d="M7.05 10.73 A4.9 4.9 0 0 0 8.65 1.66" fill="none" stroke="#8a8a8a" stroke-width="1.7"/><path d="M0.33 11.9 L5.2 11.9 L4.5 8.1Z" fill="#8a8a8a"/><path d="M7.5 0 L12.4 0 L7.7 4.1Z" fill="#8a8a8a"/></svg>
<svg style="position:absolute;left:1808.9px;top:149.4px" width="12" height="11" viewBox="0 0 12 11"><rect x="0.65" y="0.6" width="10.7" height="9.8" fill="none" stroke="#8a8a8a" stroke-width="1.3"/><rect x="0" y="0" width="12" height="2.7" fill="#8a8a8a"/></svg>
<svg style="position:absolute;left:1827.4px;top:148.2px" width="14" height="13.5" viewBox="0 0 14 13.5"><path d="M3.29 2.96 A5.5 5.5 0 1 1 4.35 11.0" fill="none" stroke="#8a8a8a" stroke-width="1.8"/><path d="M0.2 0 L0.2 5.8 L6.3 5.8Z" fill="#8a8a8a"/></svg>
<svg style="position:absolute;left:1846.6px;top:149.4px" width="11" height="12" viewBox="0 0 11 12"><path d="M2.4 5.6 V4.4 A3.3 3.3 0 0 1 9 4.4 V5.6" fill="none" stroke="#8a8a8a" stroke-width="1.9"/><rect x="0.3" y="6.4" width="10.4" height="5.6" fill="#8a8a8a"/><rect x="5.2" y="7.4" width="0.9" height="3.6" fill="#fff"/></svg>
<svg style="position:absolute;left:1865.9px;top:149.4px" width="12" height="11" viewBox="0 0 12 11"><path d="M0.8 0.8 L11.2 10.2 M11.2 0.8 L0.8 10.2" stroke="#8a8a8a" stroke-width="2.4"/></svg>
<div style="position:absolute;left:1115px;top:171px;width:782px;height:35px;background:#eff1f5;box-shadow:0 1px 1px rgba(0,0,0,0.04);"></div>
<div style="position:absolute;left:1122px;top:174px;width:60px;height:29px;background:#f2f3f6;border-radius:4px;box-shadow:0 0 0 1px #eef0f4;"></div>
<div style="position:absolute;left:1187px;top:174px;width:119px;height:29px;background:#f2f3f6;border-radius:4px;box-shadow:0 0 0 1px #eef0f4;"></div>
<div style="position:absolute;left:1312.5px;top:174px;width:87px;height:29px;background:#f2f3f6;border-radius:4px;box-shadow:0 0 0 1px #eef0f4;"></div>
<div style="position:absolute;left:1402.7px;top:174px;width:88px;height:29px;background:#f2f3f6;border-radius:4px;box-shadow:0 0 0 1px #eef0f4;"></div>
<div style="position:absolute;left:1495px;top:174px;width:69px;height:29px;background:#f2f3f6;border-radius:4px;box-shadow:0 0 0 1px #eef0f4;"></div>
<svg style="position:absolute;left:1130.5px;top:182.5px" width="12" height="12" viewBox="0 0 12 12"><circle cx="7.3" cy="4.7" r="3.5" fill="none" stroke="#444b55" stroke-width="1.25"/><path d="M4.9 7.1 L1 11" stroke="#444b55" stroke-width="1.6" stroke-linecap="round"/></svg>
<div class="t" style="left:1148.6px;top:180.00px;font-size:12px;line-height:15px;color:#444b55;font-weight:normal;font-style:normal;letter-spacing:-0.133px;">Filter</div>
<svg style="position:absolute;left:1195px;top:179.5px" width="14" height="15" viewBox="0 0 14 15"><path d="M3.8 0.3 V10" stroke="#1c9ce6" stroke-width="2"/><path d="M0.4 8.4 L7.2 8.4 L3.8 14.4Z" fill="#1c9ce6"/><text x="7.6" y="6.6" font-size="7.4" font-family="Liberation Sans" font-weight="bold" fill="#4a5560">A</text><text x="7.8" y="14" font-size="7.4" font-family="Liberation Sans" font-weight="bold" fill="#4a5560">Z</text></svg>
<div class="t" style="left:1215.5px;top:180.00px;font-size:12px;line-height:15px;color:#444b55;font-weight:normal;font-style:normal;letter-spacing:-0.282px;">Advance Sorting</div>
<svg style="position:absolute;left:1321.5px;top:182px" width="12" height="12" viewBox="0 0 12 12"><rect x="0" y="0" width="12" height="12" rx="1.5" fill="#3f4d63"/><rect x="2.5" y="1.3" width="6.5" height="3.2" fill="#f0f2f6"/><circle cx="6" cy="8.3" r="1.6" fill="#f0f2f6"/></svg>
<div class="t" style="left:1343.7px;top:180.00px;font-size:12px;line-height:15px;color:#444b55;font-weight:normal;font-style:normal;letter-spacing:-0.248px;">Add New</div>
<svg style="position:absolute;left:1412.5px;top:182.5px" width="11" height="11" viewBox="0 0 11 11"><rect x="4.55" y="0.2" width="1.9" height="10.6" rx="0.4" fill="#3f4d63" transform="rotate(0 5.5 5.5)"/><rect x="4.55" y="0.2" width="1.9" height="10.6" rx="0.4" fill="#3f4d63" transform="rotate(45 5.5 5.5)"/><rect x="4.55" y="0.2" width="1.9" height="10.6" rx="0.4" fill="#3f4d63" transform="rotate(90 5.5 5.5)"/><rect x="4.55" y="0.2" width="1.9" height="10.6" rx="0.4" fill="#3f4d63" transform="rotate(135 5.5 5.5)"/><circle cx="5.5" cy="5.5" r="3.6" fill="#3f4d63"/><circle cx="5.5" cy="5.5" r="2.1" fill="#f1f2f6"/></svg>
<div class="t" style="left:1429.8px;top:180.00px;font-size:12px;line-height:15px;color:#444b55;font-weight:normal;font-style:normal;letter-spacing:-0.505px;">Columns...</div>
<svg style="position:absolute;left:1503px;top:180.5px" width="15" height="13" viewBox="0 0 15 13"><path d="M2.8 6.5 L12 2.2 M2.8 6.5 L12 10.8" stroke="#1c9ce6" stroke-width="1.5"/><circle cx="2.8" cy="6.5" r="2.4" fill="#1c9ce6"/><circle cx="12" cy="2.4" r="2.3" fill="#1c9ce6"/><circle cx="12" cy="10.6" r="2.3" fill="#1c9ce6"/></svg>
<div class="t" style="left:1523.7px;top:180.00px;font-size:12px;line-height:15px;color:#444b55;font-weight:normal;font-style:normal;letter-spacing:-0.196px;">Export</div>
<div style="position:absolute;left:1147px;top:213px;width:310px;height:3px;background:#2d62a0;"></div>
<div class="t" style="left:1215.7px;top:217.00px;font-size:13.8px;line-height:17px;color:#2d62a0;font-weight:normal;font-style:normal;letter-spacing:0.114px;">OBJECT IDENTITY (TNR)</div>
<div style="position:absolute;left:1115px;top:249px;width:782px;height:1px;background:#e4e4e4;"></div>
<div style="position:absolute;left:1126px;top:265px;width:11px;height:11px;border:2px solid #555;box-sizing:border-box;"></div>
<div class="t" style="left:1158.1px;top:263.00px;font-size:11.6px;line-height:14px;color:#555;font-weight:normal;font-style:normal;">TYPE</div>
<svg style="position:absolute;left:1248.5px;top:266px" width="7" height="10" viewBox="0 0 7 10"><path d="M0.5 4 L3.5 0.5 L6.5 4Z M0.5 6 L3.5 9.5 L6.5 6Z" fill="#d6d6d6"/></svg>
<div class="t" style="left:1274.7px;top:262.00px;font-size:12.91px;line-height:16px;color:#555;font-weight:normal;font-style:normal;">NAME</div>
<svg style="position:absolute;left:1450px;top:265.8px" width="9" height="5" viewBox="0 0 9 5"><path d="M0 4.5 L4.5 0 L9 4.5Z" fill="#333"/></svg>
<div class="t" style="left:1477.3px;top:262.00px;font-size:12.51px;line-height:16px;color:#555;font-weight:normal;font-style:normal;">ACTIONS</div>
<svg style="position:absolute;left:1771px;top:266.5px" width="7" height="10" viewBox="0 0 7 10"><path d="M0.5 4 L3.5 0.5 L6.5 4Z M0.5 6 L3.5 9.5 L6.5 6Z" fill="#d6d6d6"/></svg>
<svg style="position:absolute;left:1883.5px;top:266.5px" width="7" height="10" viewBox="0 0 7 10"><path d="M0.5 4 L3.5 0.5 L6.5 4Z M0.5 6 L3.5 9.5 L6.5 6Z" fill="#d6d6d6"/></svg>
<div style="position:absolute;left:1115px;top:292px;width:782px;height:1px;background:#e4e4e4;"></div>
<div style="position:absolute;left:1115px;top:372.5px;width:782px;height:1px;background:#e6e6e6;"></div>
<div style="position:absolute;left:1126.2px;top:327.3px;width:11px;height:11px;border:2px solid #8f8f8f;box-sizing:border-box;"></div>
<svg style="position:absolute;left:1154px;top:327.0px" width="14" height="11" viewBox="0 0 14 11"><rect x="0.6" y="0.6" width="12.8" height="9.8" fill="#fff" stroke="#111" stroke-width="1.2"/><path d="M3 2.6 V4 H5.6 M8.6 2.6 V4 H7.4 M2.6 6.4 H5.2" fill="none" stroke="#444" stroke-width="0.9"/><rect x="8" y="6.8" width="5.4" height="3.6" fill="#fff" stroke="#111" stroke-width="1"/></svg>
<div class="t" style="left:1174.8px;top:324.00px;font-size:13.06px;line-height:16px;color:#333;font-weight:normal;font-style:normal;">Drawing Print</div>
<div class="t" style="left:1273.5px;top:324.00px;font-size:13.41px;line-height:17px;color:#3a7dc4;font-weight:normal;font-style:normal;">A-0025009</div>
<svg style="position:absolute;left:1476.8px;top:326.2px" width="12.4" height="12.4" viewBox="0 0 12.4 12.4"><circle cx="6.2" cy="6.2" r="6.1" fill="#3a7dc4"/><path d="M6.2 2.6 V9.8 M2.6 6.2 H9.8" stroke="#fff" stroke-width="2"/></svg>
<svg style="position:absolute;left:1491.1px;top:325.8px" width="12" height="12" viewBox="0 0 12 12"><circle cx="2" cy="10" r="1.8" fill="#3a7dc4"/><path d="M0.6 5.2 A6.2 6.2 0 0 1 6.8 11.4" fill="none" stroke="#3a7dc4" stroke-width="2"/><path d="M0.6 1 A10.4 10.4 0 0 1 11 11.4" fill="none" stroke="#3a7dc4" stroke-width="2"/></svg>
<div style="position:absolute;left:1796px;top:321.70px;width:82px;height:22.5px;border:1px dashed #1e8ffa;border-radius:3px;box-sizing:border-box"></div>
<div class="t" style="left:1815.2px;top:327.00px;font-size:9.29px;line-height:12px;color:#222;font-weight:normal;font-style:normal;">Drop Zone</div>
<div style="position:absolute;left:1115px;top:373px;width:782px;height:82.5px;background:#f9f9f9;"></div>
<div style="position:absolute;left:1115px;top:455.0px;width:782px;height:1px;background:#e6e6e6;"></div>
<div style="position:absolute;left:1126.2px;top:408.8px;width:11px;height:11px;border:2px solid #8f8f8f;box-sizing:border-box;"></div>
<svg style="position:absolute;left:1154px;top:408.5px" width="14" height="11" viewBox="0 0 14 11"><rect x="0.6" y="0.6" width="12.8" height="9.8" fill="#fff" stroke="#111" stroke-width="1.2"/><path d="M3 2.6 V4 H5.6 M8.6 2.6 V4 H7.4 M2.6 6.4 H5.2" fill="none" stroke="#444" stroke-width="0.9"/><rect x="8" y="6.8" width="5.4" height="3.6" fill="#fff" stroke="#111" stroke-width="1"/></svg>
<div class="t" style="left:1174.8px;top:406.00px;font-size:13.06px;line-height:16px;color:#333;font-weight:normal;font-style:normal;">Drawing Print</div>
<div class="t" style="left:1273.5px;top:405.00px;font-size:13.41px;line-height:17px;color:#3a7dc4;font-weight:normal;font-style:normal;">A-0032926</div>
<svg style="position:absolute;left:1476.8px;top:407.7px" width="12.4" height="12.4" viewBox="0 0 12.4 12.4"><circle cx="6.2" cy="6.2" r="6.1" fill="#3a7dc4"/><path d="M6.2 2.6 V9.8 M2.6 6.2 H9.8" stroke="#fff" stroke-width="2"/></svg>
<svg style="position:absolute;left:1491.1px;top:407.3px" width="12" height="12" viewBox="0 0 12 12"><circle cx="2" cy="10" r="1.8" fill="#3a7dc4"/><path d="M0.6 5.2 A6.2 6.2 0 0 1 6.8 11.4" fill="none" stroke="#3a7dc4" stroke-width="2"/><path d="M0.6 1 A10.4 10.4 0 0 1 11 11.4" fill="none" stroke="#3a7dc4" stroke-width="2"/></svg>
<div style="position:absolute;left:1796px;top:403.20px;width:82px;height:22.5px;border:1px dashed #1e8ffa;border-radius:3px;box-sizing:border-box"></div>
<div class="t" style="left:1815.2px;top:409.00px;font-size:9.29px;line-height:12px;color:#222;font-weight:normal;font-style:normal;">Drop Zone</div>
<div style="position:absolute;left:1115px;top:498.5px;width:782px;height:1px;background:#e6e6e6;"></div>
<div style="position:absolute;left:1126.2px;top:471.8px;width:11px;height:11px;border:2px solid #8f8f8f;box-sizing:border-box;"></div>
<svg style="position:absolute;left:1153.8px;top:469.8px" width="15" height="14.5" viewBox="0 0 15 14.5"><text x="0.5" y="4" font-size="4.6" font-family="Liberation Sans" font-weight="bold" fill="#d22" letter-spacing="0.3">CAD</text><rect x="0.7" y="4.9" width="13.2" height="9" fill="#fff" stroke="#1b1b55" stroke-width="1.3"/><path d="M2.6 7 V9 H5.6 M10.6 7 V8.4 H8 M2.6 11.2 H6" fill="none" stroke="#3d86d0" stroke-width="1"/><rect x="9" y="10" width="4.4" height="3.4" fill="#fff" stroke="#3d86d0" stroke-width="0.9"/></svg>
<div class="t" style="left:1174.8px;top:468.00px;font-size:12.98px;line-height:16px;color:#333;font-weight:normal;font-style:normal;">CAD Drawing</div>
<div class="t" style="left:1273.5px;top:468.00px;font-size:12.95px;line-height:16px;color:#3a7dc4;font-weight:normal;font-style:normal;">new specification</div>
<svg style="position:absolute;left:1476.8px;top:470.7px" width="12.4" height="12.4" viewBox="0 0 12.4 12.4"><circle cx="6.2" cy="6.2" r="6.1" fill="#3a7dc4"/><path d="M6.2 2.6 V9.8 M2.6 6.2 H9.8" stroke="#fff" stroke-width="2"/></svg>
<svg style="position:absolute;left:1491.1px;top:470.3px" width="12" height="12" viewBox="0 0 12 12"><circle cx="2" cy="10" r="1.8" fill="#3a7dc4"/><path d="M0.6 5.2 A6.2 6.2 0 0 1 6.8 11.4" fill="none" stroke="#3a7dc4" stroke-width="2"/><path d="M0.6 1 A10.4 10.4 0 0 1 11 11.4" fill="none" stroke="#3a7dc4" stroke-width="2"/></svg>
<div style="position:absolute;left:1796px;top:466.20px;width:82px;height:22.5px;border:1px dashed #1e8ffa;border-radius:3px;box-sizing:border-box"></div>
<div class="t" style="left:1815.2px;top:472.00px;font-size:9.29px;line-height:12px;color:#222;font-weight:normal;font-style:normal;">Drop Zone</div>
<div style="position:absolute;left:1115px;top:499px;width:782px;height:44px;background:#f9f9f9;"></div>
<div style="position:absolute;left:1115px;top:542.5px;width:782px;height:1px;background:#e6e6e6;"></div>
<div style="position:absolute;left:1126.2px;top:515.8px;width:11px;height:11px;border:2px solid #8f8f8f;box-sizing:border-box;"></div>
<svg style="position:absolute;left:1154px;top:515.5px" width="14" height="11" viewBox="0 0 14 11"><rect x="0.6" y="0.6" width="12.8" height="9.8" fill="#fff" stroke="#111" stroke-width="1.2"/><path d="M3 2.6 V4 H5.6 M8.6 2.6 V4 H7.4 M2.6 6.4 H5.2" fill="none" stroke="#444" stroke-width="0.9"/><rect x="8" y="6.8" width="5.4" height="3.6" fill="#fff" stroke="#111" stroke-width="1"/></svg>
<div class="t" style="left:1174.8px;top:512.00px;font-size:13.06px;line-height:16px;color:#333;font-weight:normal;font-style:normal;">Drawing Print</div>
<div class="t" style="left:1273.5px;top:513.00px;font-size:12.36px;line-height:15px;color:#3a7dc4;font-weight:normal;font-style:normal;">TECHNIA_AUTO_SPEC1</div>
<svg style="position:absolute;left:1476.8px;top:514.6999999999999px" width="12.4" height="12.4" viewBox="0 0 12.4 12.4"><circle cx="6.2" cy="6.2" r="6.1" fill="#3a7dc4"/><path d="M6.2 2.6 V9.8 M2.6 6.2 H9.8" stroke="#fff" stroke-width="2"/></svg>
<svg style="position:absolute;left:1491.1px;top:514.3px" width="12" height="12" viewBox="0 0 12 12"><circle cx="2" cy="10" r="1.8" fill="#3a7dc4"/><path d="M0.6 5.2 A6.2 6.2 0 0 1 6.8 11.4" fill="none" stroke="#3a7dc4" stroke-width="2"/><path d="M0.6 1 A10.4 10.4 0 0 1 11 11.4" fill="none" stroke="#3a7dc4" stroke-width="2"/></svg>
<div style="position:absolute;left:1796px;top:510.20px;width:82px;height:22.5px;border:1px dashed #1e8ffa;border-radius:3px;box-sizing:border-box"></div>
<div class="t" style="left:1815.2px;top:516.00px;font-size:9.29px;line-height:12px;color:#222;font-weight:normal;font-style:normal;">Drop Zone</div>
<div class="t" style="left:1508.5px;top:304.00px;font-size:12.81px;line-height:16px;color:#3a7dc4;font-weight:normal;font-style:normal;">3DDCollabWidget.png (48 KB)</div>
<svg style="position:absolute;left:1685.7px;top:306.0px" width="13.5" height="11" viewBox="0 0 13.5 11"><path d="M5.4 0.4 H8.2 V3.6 H10.4 L6.8 7 L3.2 3.6 H5.4Z" fill="#3a7dc4"/><path d="M0 5.2 H2.6 V8.2 H10.9 V5.2 H13.5 V11 H0Z" fill="#3a7dc4"/></svg>
<svg style="position:absolute;left:1703.7px;top:305.0px" width="10.2" height="12" viewBox="0 0 10.2 12"><path d="M2.4 5 V3.6 A2.7 2.7 0 0 1 7.8 3.6 V5" fill="none" stroke="#3a7dc4" stroke-width="1.7"/><rect x="0" y="5" width="10.2" height="7" fill="#3a7dc4"/><rect x="4.5" y="6.8" width="1.3" height="3.4" fill="#fff"/></svg>
<svg style="position:absolute;left:1718.4px;top:306.3px" width="13.4" height="10.5" viewBox="0 0 13.4 10.5"><ellipse cx="6.7" cy="5.25" rx="6" ry="4.4" fill="none" stroke="#3a7dc4" stroke-width="1.6"/><circle cx="6.7" cy="5.25" r="2.9" fill="#3a7dc4"/><circle cx="6.7" cy="5.25" r="1" fill="#fff"/></svg>
<svg style="position:absolute;left:1736.1000000000001px;top:306.2px" width="10.6" height="10.6" viewBox="0 0 10.6 10.6"><path d="M1.5 1.5 L9.1 9.1 M9.1 1.5 L1.5 9.1" stroke="#3a7dc4" stroke-width="2.6"/></svg>
<div class="t" style="left:1508.5px;top:324.00px;font-size:12.64px;line-height:16px;color:#3a7dc4;font-weight:normal;font-style:normal;">532_Mercury_Spin.png (2 MB)</div>
<svg style="position:absolute;left:1684.1px;top:325.8px" width="13.5" height="11" viewBox="0 0 13.5 11"><path d="M5.4 0.4 H8.2 V3.6 H10.4 L6.8 7 L3.2 3.6 H5.4Z" fill="#3a7dc4"/><path d="M0 5.2 H2.6 V8.2 H10.9 V5.2 H13.5 V11 H0Z" fill="#3a7dc4"/></svg>
<svg style="position:absolute;left:1702.1px;top:324.8px" width="10.2" height="12" viewBox="0 0 10.2 12"><path d="M2.4 5 V3.6 A2.7 2.7 0 0 1 7.8 3.6 V5" fill="none" stroke="#3a7dc4" stroke-width="1.7"/><rect x="0" y="5" width="10.2" height="7" fill="#3a7dc4"/><rect x="4.5" y="6.8" width="1.3" height="3.4" fill="#fff"/></svg>
<svg style="position:absolute;left:1716.8px;top:326.1px" width="13.4" height="10.5" viewBox="0 0 13.4 10.5"><ellipse cx="6.7" cy="5.25" rx="6" ry="4.4" fill="none" stroke="#3a7dc4" stroke-width="1.6"/><circle cx="6.7" cy="5.25" r="2.9" fill="#3a7dc4"/><circle cx="6.7" cy="5.25" r="1" fill="#fff"/></svg>
<svg style="position:absolute;left:1734.5px;top:326.0px" width="10.6" height="10.6" viewBox="0 0 10.6 10.6"><path d="M1.5 1.5 L9.1 9.1 M9.1 1.5 L1.5 9.1" stroke="#3a7dc4" stroke-width="2.6"/></svg>
<div class="t" style="left:1508.5px;top:344.00px;font-size:12.55px;line-height:16px;color:#3a7dc4;font-weight:normal;font-style:normal;">CarStructure.jpg (0 Bytes)</div>
<svg style="position:absolute;left:1657.1px;top:345.6px" width="13.5" height="11" viewBox="0 0 13.5 11"><path d="M5.4 0.4 H8.2 V3.6 H10.4 L6.8 7 L3.2 3.6 H5.4Z" fill="#3a7dc4"/><path d="M0 5.2 H2.6 V8.2 H10.9 V5.2 H13.5 V11 H0Z" fill="#3a7dc4"/></svg>
<svg style="position:absolute;left:1675.1px;top:344.6px" width="10.2" height="12" viewBox="0 0 10.2 12"><path d="M2.4 5 V3.6 A2.7 2.7 0 0 1 7.8 3.6 V5" fill="none" stroke="#3a7dc4" stroke-width="1.7"/><rect x="0" y="5" width="10.2" height="7" fill="#3a7dc4"/><rect x="4.5" y="6.8" width="1.3" height="3.4" fill="#fff"/></svg>
<svg style="position:absolute;left:1689.8px;top:345.90000000000003px" width="13.4" height="10.5" viewBox="0 0 13.4 10.5"><ellipse cx="6.7" cy="5.25" rx="6" ry="4.4" fill="none" stroke="#3a7dc4" stroke-width="1.6"/><circle cx="6.7" cy="5.25" r="2.9" fill="#3a7dc4"/><circle cx="6.7" cy="5.25" r="1" fill="#fff"/></svg>
<svg style="position:absolute;left:1707.5px;top:345.8px" width="10.6" height="10.6" viewBox="0 0 10.6 10.6"><path d="M1.5 1.5 L9.1 9.1 M9.1 1.5 L1.5 9.1" stroke="#3a7dc4" stroke-width="2.6"/></svg>
<div class="t" style="left:1508.5px;top:386.00px;font-size:12.62px;line-height:16px;color:#3a7dc4;font-weight:normal;font-style:normal;">ChatChannelUI.png (1 MB)</div>
<svg style="position:absolute;left:1664.2px;top:387.9px" width="13.5" height="11" viewBox="0 0 13.5 11"><path d="M5.4 0.4 H8.2 V3.6 H10.4 L6.8 7 L3.2 3.6 H5.4Z" fill="#3a7dc4"/><path d="M0 5.2 H2.6 V8.2 H10.9 V5.2 H13.5 V11 H0Z" fill="#3a7dc4"/></svg>
<svg style="position:absolute;left:1682.2px;top:386.9px" width="10.2" height="12" viewBox="0 0 10.2 12"><path d="M2.4 5 V3.6 A2.7 2.7 0 0 1 7.8 3.6 V5" fill="none" stroke="#3a7dc4" stroke-width="1.7"/><rect x="0" y="5" width="10.2" height="7" fill="#3a7dc4"/><rect x="4.5" y="6.8" width="1.3" height="3.4" fill="#fff"/></svg>
<svg style="position:absolute;left:1696.9px;top:388.2px" width="13.4" height="10.5" viewBox="0 0 13.4 10.5"><ellipse cx="6.7" cy="5.25" rx="6" ry="4.4" fill="none" stroke="#3a7dc4" stroke-width="1.6"/><circle cx="6.7" cy="5.25" r="2.9" fill="#3a7dc4"/><circle cx="6.7" cy="5.25" r="1" fill="#fff"/></svg>
<svg style="position:absolute;left:1714.6000000000001px;top:388.09999999999997px" width="10.6" height="10.6" viewBox="0 0 10.6 10.6"><path d="M1.5 1.5 L9.1 9.1 M9.1 1.5 L1.5 9.1" stroke="#3a7dc4" stroke-width="2.6"/></svg>
<div class="t" style="left:1508.5px;top:406.00px;font-size:12.8px;line-height:16px;color:#3a7dc4;font-weight:normal;font-style:normal;">diode.txt (32 Bytes)</div>
<svg style="position:absolute;left:1622.3px;top:407.5px" width="13.5" height="11" viewBox="0 0 13.5 11"><path d="M5.4 7 H8.2 V3.8 H10.4 L6.8 0.4 L3.2 3.8 H5.4Z" fill="#3a7dc4"/><path d="M0 5.2 H2.6 V8.2 H10.9 V5.2 H13.5 V11 H0Z" fill="#3a7dc4"/></svg>
<svg style="position:absolute;left:1640.3px;top:406.5px" width="10.2" height="12" viewBox="0 0 10.2 12"><path d="M2.4 5 V3.6 A2.7 2.7 0 0 1 7.8 3.6 V4" fill="none" stroke="#3a7dc4" stroke-width="1.7"/><rect x="0" y="5" width="10.2" height="7" fill="#3a7dc4"/><rect x="4.5" y="6.8" width="1.3" height="3.4" fill="#fff"/></svg>
<svg style="position:absolute;left:1655.0px;top:407.7px" width="10.6" height="10.6" viewBox="0 0 10.6 10.6"><path d="M1.5 1.5 L9.1 9.1 M9.1 1.5 L1.5 9.1" stroke="#3a7dc4" stroke-width="2.6"/></svg>
<div class="t" style="left:1508.5px;top:426.00px;font-size:12.8px;line-height:16px;color:#3a7dc4;font-weight:normal;font-style:normal;">npn.txt (15 Bytes)</div>
<svg style="position:absolute;left:1612.3px;top:427.9px" width="13.5" height="11" viewBox="0 0 13.5 11"><path d="M5.4 0.4 H8.2 V3.6 H10.4 L6.8 7 L3.2 3.6 H5.4Z" fill="#3a7dc4"/><path d="M0 5.2 H2.6 V8.2 H10.9 V5.2 H13.5 V11 H0Z" fill="#3a7dc4"/></svg>
<svg style="position:absolute;left:1630.3px;top:426.9px" width="10.2" height="12" viewBox="0 0 10.2 12"><path d="M2.4 5 V3.6 A2.7 2.7 0 0 1 7.8 3.6 V5" fill="none" stroke="#3a7dc4" stroke-width="1.7"/><rect x="0" y="5" width="10.2" height="7" fill="#3a7dc4"/><rect x="4.5" y="6.8" width="1.3" height="3.4" fill="#fff"/></svg>
<svg style="position:absolute;left:1645.0px;top:428.09999999999997px" width="10.6" height="10.6" viewBox="0 0 10.6 10.6"><path d="M1.5 1.5 L9.1 9.1 M9.1 1.5 L1.5 9.1" stroke="#3a7dc4" stroke-width="2.6"/></svg>
<div class="t" style="left:1508.5px;top:468.00px;font-size:12.69px;line-height:16px;color:#3a7dc4;font-weight:normal;font-style:normal;">thAFJOKH9T.jpg (18 KB)</div>
<svg style="position:absolute;left:1653.0px;top:471.40000000000003px" width="13.5" height="11" viewBox="0 0 13.5 11"><path d="M5.4 0.4 H8.2 V3.6 H10.4 L6.8 7 L3.2 3.6 H5.4Z" fill="#3a7dc4"/><path d="M0 5.2 H2.6 V8.2 H10.9 V5.2 H13.5 V11 H0Z" fill="#3a7dc4"/></svg>
<svg style="position:absolute;left:1671.0px;top:470.40000000000003px" width="10.2" height="12" viewBox="0 0 10.2 12"><path d="M2.4 5 V3.6 A2.7 2.7 0 0 1 7.8 3.6 V5" fill="none" stroke="#3a7dc4" stroke-width="1.7"/><rect x="0" y="5" width="10.2" height="7" fill="#3a7dc4"/><rect x="4.5" y="6.8" width="1.3" height="3.4" fill="#fff"/></svg>
<svg style="position:absolute;left:1685.7px;top:471.70000000000005px" width="13.4" height="10.5" viewBox="0 0 13.4 10.5"><ellipse cx="6.7" cy="5.25" rx="6" ry="4.4" fill="none" stroke="#3a7dc4" stroke-width="1.6"/><circle cx="6.7" cy="5.25" r="2.9" fill="#3a7dc4"/><circle cx="6.7" cy="5.25" r="1" fill="#fff"/></svg>
<svg style="position:absolute;left:1703.4px;top:471.6px" width="10.6" height="10.6" viewBox="0 0 10.6 10.6"><path d="M1.5 1.5 L9.1 9.1 M9.1 1.5 L1.5 9.1" stroke="#3a7dc4" stroke-width="2.6"/></svg>
<div style="position:absolute;left:1115px;top:784px;width:782px;height:1px;background:#dcdcdc;"></div>
<div style="position:absolute;left:1121.3px;top:792.2px;width:49.5px;height:34.4px;border:1px solid #dcdcdc;border-radius:4px;box-sizing:border-box;background:#fff;"></div>
<div class="t" style="left:1135.2px;top:801.00px;font-size:13px;line-height:16px;color:#333;font-weight:normal;font-style:normal;">9</div>
<svg style="position:absolute;left:1150.3px;top:806.8px" width="6.5" height="4" viewBox="0 0 6.5 4"><path d="M0 0 H6.5 L3.25 3.8Z" fill="#444"/></svg>
<div class="t" style="left:1196.6px;top:801.00px;font-size:12.97px;line-height:16px;color:#333;font-weight:normal;font-style:normal;">Showing 1 to 4 of 4 entries</div>
<div style="position:absolute;left:1702.6px;top:792.4px;width:175px;height:38px;border:1px solid #dcdcdc;border-radius:4px;box-sizing:border-box;box-shadow:0 1px 2px rgba(0,0,0,0.12);background:#fff;overflow:hidden"><div style="position:absolute;left:77px;top:0;width:40px;height:100%;background:#f2f2f2;border-left:1px solid #dcdcdc;border-right:1px solid #dcdcdc;box-sizing:border-box"></div></div>
<div class="t" style="left:1717.9px;top:804.00px;font-size:12.36px;line-height:15px;color:#b8b8b8;font-weight:normal;font-style:normal;">Previous</div>
<div class="t" style="left:1796.7px;top:803.00px;font-size:13px;line-height:16px;color:#333;font-weight:normal;font-style:normal;">1</div>
<div class="t" style="left:1835.5px;top:803.00px;font-size:12.89px;line-height:16px;color:#b8b8b8;font-weight:normal;font-style:normal;">Next</div>
</body></html>
